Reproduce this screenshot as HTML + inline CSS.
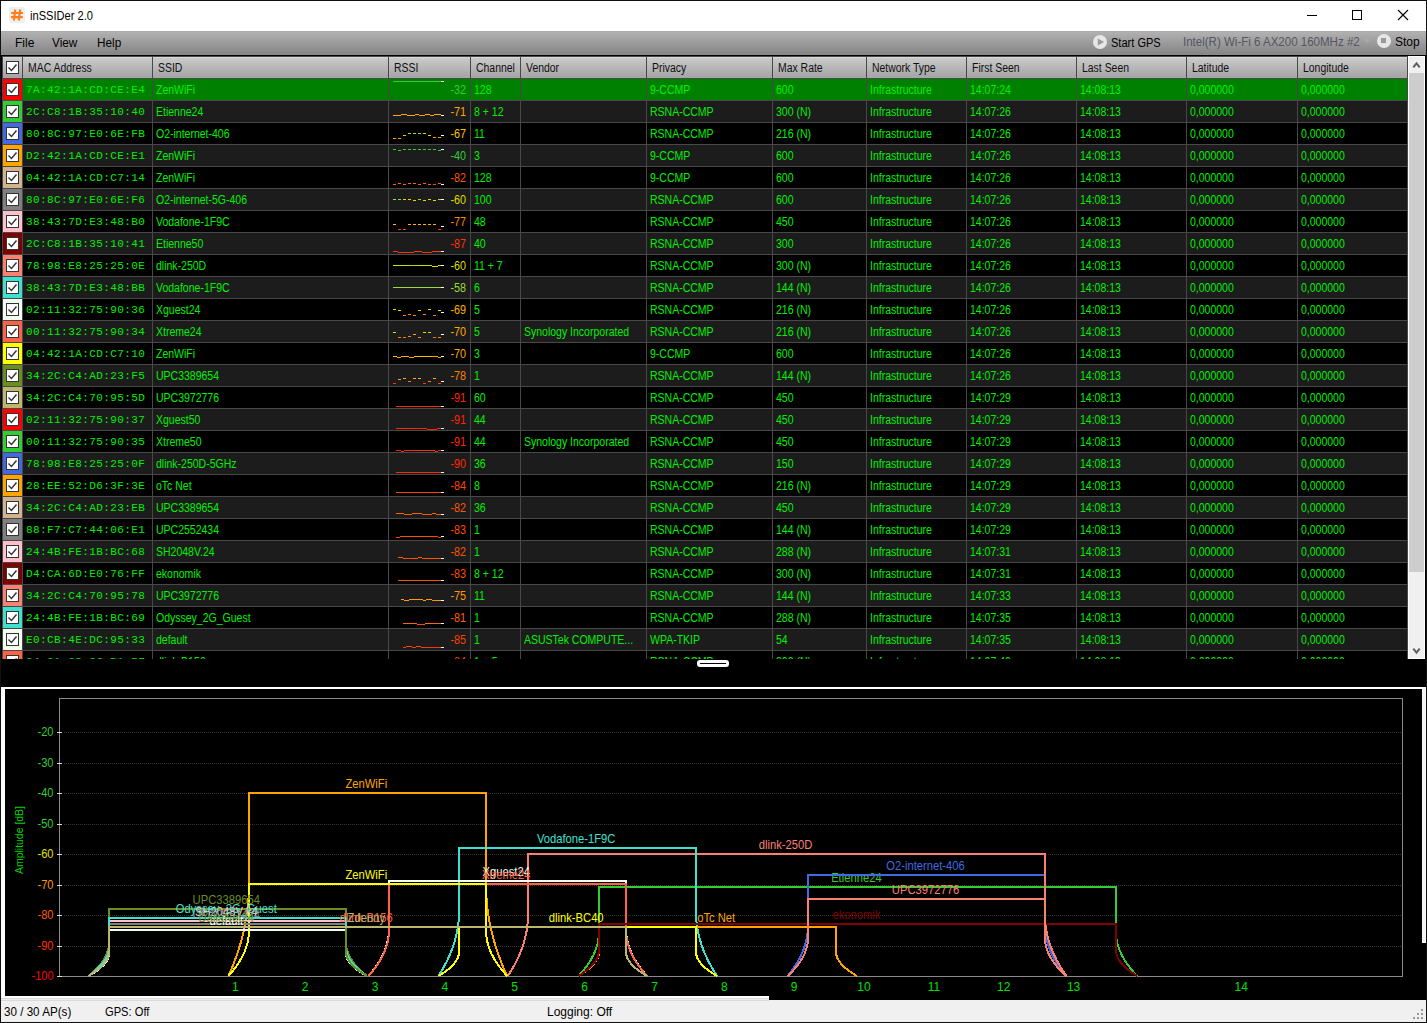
<!DOCTYPE html>
<html><head><meta charset="utf-8"><title>inSSIDer 2.0</title>
<style>
*{box-sizing:border-box}
html,body{margin:0;padding:0}
body{width:1427px;height:1023px;overflow:hidden;position:relative;background:#000;font-family:"Liberation Sans",sans-serif;font-size:12px}
.a{position:absolute}
.t{position:absolute;white-space:pre;line-height:14px;transform-origin:0 50%}
.cell{color:#00f000;transform:scaleX(.875)}
.mac{font-family:"Liberation Mono",monospace;font-size:11px;letter-spacing:0.42px;color:#00f000}
.hdr{color:#111;transform:scaleX(.87)}
.ui{color:#000;transform:scaleX(.9)}
.cb{position:absolute;width:13px;height:13px;background:#fff;border:1px solid #333}
</style></head><body>

<div class="a" style="left:0;top:0;width:1427px;height:1023px;background:#111"></div>
<div class="a" style="left:1px;top:1px;width:1425px;height:30px;background:#fff"></div>
<div class="a" style="left:9px;top:7px;width:16px;height:16px;background:#eef0f0;border-radius:2px"></div>
<svg class="a" style="left:9px;top:7px" width="16" height="16" viewBox="0 0 16 16"><g stroke="#ff7f1a" stroke-width="2.2" fill="none"><path d="M6.3 2.5 L4.8 13.5 M11.2 2.5 L9.7 13.5 M2.2 6 H14 M2 10.2 H13.8"/></g></svg>
<div class="t ui" style="left:30px;top:9px;color:#000;transform:scaleX(.925)">inSSIDer 2.0</div>
<div class="a" style="left:1307px;top:15px;width:10px;height:1px;background:#000"></div>
<div class="a" style="left:1352px;top:10px;width:10px;height:10px;border:1px solid #000"></div>
<svg class="a" style="left:1397px;top:9px" width="12" height="12" viewBox="0 0 12 12"><path d="M1 1 L11 11 M11 1 L1 11" stroke="#000" stroke-width="1.1"/></svg>
<div class="a" style="left:1px;top:31px;width:1425px;height:24px;background:linear-gradient(#a8a8a8 0px,#b0b0b0 1.5px,#868686 22.5px,#8c8c8c 24px)"></div>
<div class="t ui" style="left:15px;top:36px;transform:none">File</div>
<div class="t ui" style="left:52px;top:36px;transform:scaleX(.98)">View</div>
<div class="t ui" style="left:97px;top:36px;transform:scaleX(.98)">Help</div>
<div class="a" style="left:1093px;top:35px;width:14px;height:14px;border-radius:50%;background:#e6e6e6"></div>
<svg class="a" style="left:1093px;top:35px" width="14" height="14"><path d="M4.8 3.6 L11 7 L4.8 10.4 Z" fill="#9a9a9a"/></svg>
<div class="t ui" style="left:1111px;top:36px;transform:scaleX(.92)">Start GPS</div>
<div class="t ui" style="left:1183px;top:35px;color:#555560;transform:scaleX(.96)">Intel(R) Wi-Fi 6 AX200 160MHz #2</div>
<svg class="a" style="left:1363px;top:39px" width="8" height="5"><path d="M0 0 L8 0 L4 4 Z" fill="#a8a8a8"/></svg>
<div class="a" style="left:1377px;top:34px;width:14px;height:14px;border-radius:50%;background:#e6e6e6"></div>
<div class="a" style="left:1381px;top:38px;width:5px;height:5px;background:#999"></div>
<div class="t ui" style="left:1395px;top:35px;transform:none">Stop</div>
<div class="a" style="left:1px;top:55px;width:1425px;height:967px;background:#000"></div>
<div class="a" style="left:2px;top:56px;width:1406px;height:603px;background:#484848"></div>
<div class="a" style="left:3px;top:57px;width:1404px;height:21px;background:linear-gradient(#d8d8d8 0px,#d8d8d8 1px,#cacaca 1px,#a5a5a5 20px,#ababab 21px)"></div>
<div class="a" style="left:22px;top:57px;width:1px;height:21px;background:#484848"></div>
<div class="a" style="left:152px;top:57px;width:1px;height:21px;background:#484848"></div>
<div class="a" style="left:388px;top:57px;width:1px;height:21px;background:#484848"></div>
<div class="a" style="left:470px;top:57px;width:1px;height:21px;background:#484848"></div>
<div class="a" style="left:520px;top:57px;width:1px;height:21px;background:#484848"></div>
<div class="a" style="left:646px;top:57px;width:1px;height:21px;background:#484848"></div>
<div class="a" style="left:772px;top:57px;width:1px;height:21px;background:#484848"></div>
<div class="a" style="left:866px;top:57px;width:1px;height:21px;background:#484848"></div>
<div class="a" style="left:966px;top:57px;width:1px;height:21px;background:#484848"></div>
<div class="a" style="left:1076px;top:57px;width:1px;height:21px;background:#484848"></div>
<div class="a" style="left:1186px;top:57px;width:1px;height:21px;background:#484848"></div>
<div class="a" style="left:1297px;top:57px;width:1px;height:21px;background:#484848"></div>
<div class="a" style="left:1407px;top:57px;width:1px;height:21px;background:#484848"></div>
<div class="cb" style="left:6px;top:61px"></div>
<svg class="a" style="left:6px;top:61px" width="13" height="13"><path d="M2.5 6.5 L5.5 9.5 L10.5 3.5" stroke="#333" stroke-width="1.4" fill="none"/></svg>
<div class="t hdr" style="left:28px;top:61px">MAC Address</div>
<div class="t hdr" style="left:158px;top:61px">SSID</div>
<div class="t hdr" style="left:394px;top:61px">RSSI</div>
<div class="t hdr" style="left:476px;top:61px">Channel</div>
<div class="t hdr" style="left:526px;top:61px">Vendor</div>
<div class="t hdr" style="left:652px;top:61px">Privacy</div>
<div class="t hdr" style="left:778px;top:61px">Max Rate</div>
<div class="t hdr" style="left:872px;top:61px">Network Type</div>
<div class="t hdr" style="left:972px;top:61px">First Seen</div>
<div class="t hdr" style="left:1082px;top:61px">Last Seen</div>
<div class="t hdr" style="left:1192px;top:61px">Latitude</div>
<div class="t hdr" style="left:1303px;top:61px">Longitude</div>
<div class="a" style="left:3px;top:79px;width:1404px;height:21px;background:#008000;overflow:hidden">
<div class="a" style="left:0;top:0;width:19px;height:21px;background:#ff0000"></div>
<div class="cb" style="left:3px;top:4px"></div>
<svg class="a" style="left:3px;top:4px" width="13" height="13"><path d="M2.5 6.5 L5.5 9.5 L10.5 3.5" stroke="#333" stroke-width="1.4" fill="none"/></svg>
<div class="a" style="left:19px;top:0;width:1px;height:21px;background:#484848"></div>
<div class="a" style="left:149px;top:0;width:1px;height:21px;background:#484848"></div>
<div class="a" style="left:385px;top:0;width:1px;height:21px;background:#484848"></div>
<div class="a" style="left:467px;top:0;width:1px;height:21px;background:#484848"></div>
<div class="a" style="left:517px;top:0;width:1px;height:21px;background:#484848"></div>
<div class="a" style="left:643px;top:0;width:1px;height:21px;background:#484848"></div>
<div class="a" style="left:769px;top:0;width:1px;height:21px;background:#484848"></div>
<div class="a" style="left:863px;top:0;width:1px;height:21px;background:#484848"></div>
<div class="a" style="left:963px;top:0;width:1px;height:21px;background:#484848"></div>
<div class="a" style="left:1073px;top:0;width:1px;height:21px;background:#484848"></div>
<div class="a" style="left:1183px;top:0;width:1px;height:21px;background:#484848"></div>
<div class="a" style="left:1294px;top:0;width:1px;height:21px;background:#484848"></div>
<div class="a" style="left:1404px;top:0;width:1px;height:21px;background:#484848"></div>
<div class="t mac" style="left:23px;top:4px">7A:42:1A:CD:CE:E4</div>
<div class="t cell" style="left:153px;top:4px">ZenWiFi</div>
<div class="t cell" style="left:471px;top:4px">128</div>
<div class="t cell" style="left:647px;top:4px">9-CCMP</div>
<div class="t cell" style="left:773px;top:4px">600</div>
<div class="t cell" style="left:867px;top:4px">Infrastructure</div>
<div class="t cell" style="left:967px;top:4px">14:07:24</div>
<div class="t cell" style="left:1077px;top:4px">14:08:13</div>
<div class="t cell" style="left:1187px;top:4px">0,000000</div>
<div class="t cell" style="left:1298px;top:4px">0,000000</div>
<div class="a" style="left:390px;top:2px;width:48px;height:1px;background:#33cc33"></div>
<div class="a" style="left:438px;top:2px;width:3px;height:1px;background:#fff"></div>
<div class="t" style="left:416px;width:47px;text-align:right;top:4px;color:#33cc33;transform:scaleX(.9);transform-origin:100% 50%">-32</div>
</div>
<div class="a" style="left:3px;top:101px;width:1404px;height:21px;background:#1c1c1c;overflow:hidden">
<div class="a" style="left:0;top:0;width:19px;height:21px;background:#32cd32"></div>
<div class="cb" style="left:3px;top:4px"></div>
<svg class="a" style="left:3px;top:4px" width="13" height="13"><path d="M2.5 6.5 L5.5 9.5 L10.5 3.5" stroke="#333" stroke-width="1.4" fill="none"/></svg>
<div class="a" style="left:19px;top:0;width:1px;height:21px;background:#484848"></div>
<div class="a" style="left:149px;top:0;width:1px;height:21px;background:#484848"></div>
<div class="a" style="left:385px;top:0;width:1px;height:21px;background:#484848"></div>
<div class="a" style="left:467px;top:0;width:1px;height:21px;background:#484848"></div>
<div class="a" style="left:517px;top:0;width:1px;height:21px;background:#484848"></div>
<div class="a" style="left:643px;top:0;width:1px;height:21px;background:#484848"></div>
<div class="a" style="left:769px;top:0;width:1px;height:21px;background:#484848"></div>
<div class="a" style="left:863px;top:0;width:1px;height:21px;background:#484848"></div>
<div class="a" style="left:963px;top:0;width:1px;height:21px;background:#484848"></div>
<div class="a" style="left:1073px;top:0;width:1px;height:21px;background:#484848"></div>
<div class="a" style="left:1183px;top:0;width:1px;height:21px;background:#484848"></div>
<div class="a" style="left:1294px;top:0;width:1px;height:21px;background:#484848"></div>
<div class="a" style="left:1404px;top:0;width:1px;height:21px;background:#484848"></div>
<div class="t mac" style="left:23px;top:4px">2C:C8:1B:35:10:40</div>
<div class="t cell" style="left:153px;top:4px">Etienne24</div>
<div class="t cell" style="left:471px;top:4px">8 + 12</div>
<div class="t cell" style="left:647px;top:4px">RSNA-CCMP</div>
<div class="t cell" style="left:773px;top:4px">300 (N)</div>
<div class="t cell" style="left:867px;top:4px">Infrastructure</div>
<div class="t cell" style="left:967px;top:4px">14:07:26</div>
<div class="t cell" style="left:1077px;top:4px">14:08:13</div>
<div class="t cell" style="left:1187px;top:4px">0,000000</div>
<div class="t cell" style="left:1298px;top:4px">0,000000</div>
<div class="a" style="left:390px;top:14px;width:8px;height:1px;background:#ffa700"></div>
<div class="a" style="left:398px;top:13px;width:6px;height:1px;background:#ffaa00"></div>
<div class="a" style="left:404px;top:14px;width:8px;height:1px;background:#ffa700"></div>
<div class="a" style="left:412px;top:13px;width:4px;height:1px;background:#ffaa00"></div>
<div class="a" style="left:416px;top:14px;width:6px;height:1px;background:#ffa000"></div>
<div class="a" style="left:422px;top:13px;width:5px;height:1px;background:#ffb200"></div>
<div class="a" style="left:427px;top:14px;width:4px;height:1px;background:#ffa700"></div>
<div class="a" style="left:431px;top:13px;width:7px;height:1px;background:#ffaa00"></div>
<div class="a" style="left:438px;top:14px;width:3px;height:1px;background:#fff"></div>
<div class="t" style="left:416px;width:47px;text-align:right;top:4px;color:#ffa700;transform:scaleX(.9);transform-origin:100% 50%">-71</div>
</div>
<div class="a" style="left:3px;top:123px;width:1404px;height:21px;background:#000;overflow:hidden">
<div class="a" style="left:0;top:0;width:19px;height:21px;background:#4169e1"></div>
<div class="cb" style="left:3px;top:4px"></div>
<svg class="a" style="left:3px;top:4px" width="13" height="13"><path d="M2.5 6.5 L5.5 9.5 L10.5 3.5" stroke="#333" stroke-width="1.4" fill="none"/></svg>
<div class="a" style="left:19px;top:0;width:1px;height:21px;background:#484848"></div>
<div class="a" style="left:149px;top:0;width:1px;height:21px;background:#484848"></div>
<div class="a" style="left:385px;top:0;width:1px;height:21px;background:#484848"></div>
<div class="a" style="left:467px;top:0;width:1px;height:21px;background:#484848"></div>
<div class="a" style="left:517px;top:0;width:1px;height:21px;background:#484848"></div>
<div class="a" style="left:643px;top:0;width:1px;height:21px;background:#484848"></div>
<div class="a" style="left:769px;top:0;width:1px;height:21px;background:#484848"></div>
<div class="a" style="left:863px;top:0;width:1px;height:21px;background:#484848"></div>
<div class="a" style="left:963px;top:0;width:1px;height:21px;background:#484848"></div>
<div class="a" style="left:1073px;top:0;width:1px;height:21px;background:#484848"></div>
<div class="a" style="left:1183px;top:0;width:1px;height:21px;background:#484848"></div>
<div class="a" style="left:1294px;top:0;width:1px;height:21px;background:#484848"></div>
<div class="a" style="left:1404px;top:0;width:1px;height:21px;background:#484848"></div>
<div class="t mac" style="left:23px;top:4px">80:8C:97:E0:6E:FB</div>
<div class="t cell" style="left:153px;top:4px">O2-internet-406</div>
<div class="t cell" style="left:471px;top:4px">11</div>
<div class="t cell" style="left:647px;top:4px">RSNA-CCMP</div>
<div class="t cell" style="left:773px;top:4px">216 (N)</div>
<div class="t cell" style="left:867px;top:4px">Infrastructure</div>
<div class="t cell" style="left:967px;top:4px">14:07:26</div>
<div class="t cell" style="left:1077px;top:4px">14:08:13</div>
<div class="t cell" style="left:1187px;top:4px">0,000000</div>
<div class="t cell" style="left:1298px;top:4px">0,000000</div>
<div class="a" style="left:390px;top:15px;width:3px;height:1px;background:#ff9100"></div>
<div class="a" style="left:395px;top:15px;width:3px;height:1px;background:#ff9900"></div>
<div class="a" style="left:400px;top:12px;width:3px;height:1px;background:#ffc400"></div>
<div class="a" style="left:405px;top:10px;width:3px;height:1px;background:#99dd33"></div>
<div class="a" style="left:410px;top:10px;width:3px;height:1px;background:#99dd33"></div>
<div class="a" style="left:415px;top:10px;width:3px;height:1px;background:#99dd33"></div>
<div class="a" style="left:420px;top:10px;width:3px;height:1px;background:#dddd00"></div>
<div class="a" style="left:425px;top:12px;width:3px;height:1px;background:#ffc400"></div>
<div class="a" style="left:430px;top:14px;width:3px;height:1px;background:#ff9c00"></div>
<div class="a" style="left:435px;top:14px;width:3px;height:1px;background:#ff9c00"></div>
<div class="a" style="left:438px;top:12px;width:3px;height:1px;background:#fff"></div>
<div class="t" style="left:416px;width:47px;text-align:right;top:4px;color:#ffc400;transform:scaleX(.9);transform-origin:100% 50%">-67</div>
</div>
<div class="a" style="left:3px;top:145px;width:1404px;height:21px;background:#1c1c1c;overflow:hidden">
<div class="a" style="left:0;top:0;width:19px;height:21px;background:#ffa500"></div>
<div class="cb" style="left:3px;top:4px"></div>
<svg class="a" style="left:3px;top:4px" width="13" height="13"><path d="M2.5 6.5 L5.5 9.5 L10.5 3.5" stroke="#333" stroke-width="1.4" fill="none"/></svg>
<div class="a" style="left:19px;top:0;width:1px;height:21px;background:#484848"></div>
<div class="a" style="left:149px;top:0;width:1px;height:21px;background:#484848"></div>
<div class="a" style="left:385px;top:0;width:1px;height:21px;background:#484848"></div>
<div class="a" style="left:467px;top:0;width:1px;height:21px;background:#484848"></div>
<div class="a" style="left:517px;top:0;width:1px;height:21px;background:#484848"></div>
<div class="a" style="left:643px;top:0;width:1px;height:21px;background:#484848"></div>
<div class="a" style="left:769px;top:0;width:1px;height:21px;background:#484848"></div>
<div class="a" style="left:863px;top:0;width:1px;height:21px;background:#484848"></div>
<div class="a" style="left:963px;top:0;width:1px;height:21px;background:#484848"></div>
<div class="a" style="left:1073px;top:0;width:1px;height:21px;background:#484848"></div>
<div class="a" style="left:1183px;top:0;width:1px;height:21px;background:#484848"></div>
<div class="a" style="left:1294px;top:0;width:1px;height:21px;background:#484848"></div>
<div class="a" style="left:1404px;top:0;width:1px;height:21px;background:#484848"></div>
<div class="t mac" style="left:23px;top:4px">D2:42:1A:CD:CE:E1</div>
<div class="t cell" style="left:153px;top:4px">ZenWiFi</div>
<div class="t cell" style="left:471px;top:4px">3</div>
<div class="t cell" style="left:647px;top:4px">9-CCMP</div>
<div class="t cell" style="left:773px;top:4px">600</div>
<div class="t cell" style="left:867px;top:4px">Infrastructure</div>
<div class="t cell" style="left:967px;top:4px">14:07:26</div>
<div class="t cell" style="left:1077px;top:4px">14:08:13</div>
<div class="t cell" style="left:1187px;top:4px">0,000000</div>
<div class="t cell" style="left:1298px;top:4px">0,000000</div>
<div class="a" style="left:390px;top:4px;width:3px;height:1px;background:#33cc33"></div>
<div class="a" style="left:395px;top:5px;width:3px;height:1px;background:#33cc33"></div>
<div class="a" style="left:400px;top:4px;width:3px;height:1px;background:#33cc33"></div>
<div class="a" style="left:405px;top:4px;width:3px;height:1px;background:#33cc33"></div>
<div class="a" style="left:410px;top:4px;width:3px;height:1px;background:#33cc33"></div>
<div class="a" style="left:415px;top:4px;width:3px;height:1px;background:#33cc33"></div>
<div class="a" style="left:420px;top:4px;width:3px;height:1px;background:#33cc33"></div>
<div class="a" style="left:425px;top:4px;width:3px;height:1px;background:#33cc33"></div>
<div class="a" style="left:430px;top:4px;width:3px;height:1px;background:#33cc33"></div>
<div class="a" style="left:435px;top:5px;width:3px;height:1px;background:#33cc33"></div>
<div class="a" style="left:438px;top:4px;width:3px;height:1px;background:#fff"></div>
<div class="t" style="left:416px;width:47px;text-align:right;top:4px;color:#33cc33;transform:scaleX(.9);transform-origin:100% 50%">-40</div>
</div>
<div class="a" style="left:3px;top:167px;width:1404px;height:21px;background:#000;overflow:hidden">
<div class="a" style="left:0;top:0;width:19px;height:21px;background:#d2b48c"></div>
<div class="cb" style="left:3px;top:4px"></div>
<svg class="a" style="left:3px;top:4px" width="13" height="13"><path d="M2.5 6.5 L5.5 9.5 L10.5 3.5" stroke="#333" stroke-width="1.4" fill="none"/></svg>
<div class="a" style="left:19px;top:0;width:1px;height:21px;background:#484848"></div>
<div class="a" style="left:149px;top:0;width:1px;height:21px;background:#484848"></div>
<div class="a" style="left:385px;top:0;width:1px;height:21px;background:#484848"></div>
<div class="a" style="left:467px;top:0;width:1px;height:21px;background:#484848"></div>
<div class="a" style="left:517px;top:0;width:1px;height:21px;background:#484848"></div>
<div class="a" style="left:643px;top:0;width:1px;height:21px;background:#484848"></div>
<div class="a" style="left:769px;top:0;width:1px;height:21px;background:#484848"></div>
<div class="a" style="left:863px;top:0;width:1px;height:21px;background:#484848"></div>
<div class="a" style="left:963px;top:0;width:1px;height:21px;background:#484848"></div>
<div class="a" style="left:1073px;top:0;width:1px;height:21px;background:#484848"></div>
<div class="a" style="left:1183px;top:0;width:1px;height:21px;background:#484848"></div>
<div class="a" style="left:1294px;top:0;width:1px;height:21px;background:#484848"></div>
<div class="a" style="left:1404px;top:0;width:1px;height:21px;background:#484848"></div>
<div class="t mac" style="left:23px;top:4px">04:42:1A:CD:C7:14</div>
<div class="t cell" style="left:153px;top:4px">ZenWiFi</div>
<div class="t cell" style="left:471px;top:4px">128</div>
<div class="t cell" style="left:647px;top:4px">9-CCMP</div>
<div class="t cell" style="left:773px;top:4px">600</div>
<div class="t cell" style="left:867px;top:4px">Infrastructure</div>
<div class="t cell" style="left:967px;top:4px">14:07:26</div>
<div class="t cell" style="left:1077px;top:4px">14:08:13</div>
<div class="t cell" style="left:1187px;top:4px">0,000000</div>
<div class="t cell" style="left:1298px;top:4px">0,000000</div>
<div class="a" style="left:390px;top:17px;width:3px;height:1px;background:#ff5500"></div>
<div class="a" style="left:395px;top:16px;width:3px;height:1px;background:#ff6a00"></div>
<div class="a" style="left:400px;top:17px;width:3px;height:1px;background:#ff5500"></div>
<div class="a" style="left:405px;top:16px;width:3px;height:1px;background:#ff6a00"></div>
<div class="a" style="left:410px;top:16px;width:3px;height:1px;background:#ff6000"></div>
<div class="a" style="left:415px;top:17px;width:3px;height:1px;background:#ff5500"></div>
<div class="a" style="left:420px;top:16px;width:3px;height:1px;background:#ff6000"></div>
<div class="a" style="left:425px;top:17px;width:3px;height:1px;background:#ff5500"></div>
<div class="a" style="left:430px;top:17px;width:3px;height:1px;background:#ff4400"></div>
<div class="a" style="left:435px;top:16px;width:3px;height:1px;background:#ff6000"></div>
<div class="a" style="left:438px;top:17px;width:3px;height:1px;background:#fff"></div>
<div class="t" style="left:416px;width:47px;text-align:right;top:4px;color:#ff5500;transform:scaleX(.9);transform-origin:100% 50%">-82</div>
</div>
<div class="a" style="left:3px;top:189px;width:1404px;height:21px;background:#1c1c1c;overflow:hidden">
<div class="a" style="left:0;top:0;width:19px;height:21px;background:#808080"></div>
<div class="cb" style="left:3px;top:4px"></div>
<svg class="a" style="left:3px;top:4px" width="13" height="13"><path d="M2.5 6.5 L5.5 9.5 L10.5 3.5" stroke="#333" stroke-width="1.4" fill="none"/></svg>
<div class="a" style="left:19px;top:0;width:1px;height:21px;background:#484848"></div>
<div class="a" style="left:149px;top:0;width:1px;height:21px;background:#484848"></div>
<div class="a" style="left:385px;top:0;width:1px;height:21px;background:#484848"></div>
<div class="a" style="left:467px;top:0;width:1px;height:21px;background:#484848"></div>
<div class="a" style="left:517px;top:0;width:1px;height:21px;background:#484848"></div>
<div class="a" style="left:643px;top:0;width:1px;height:21px;background:#484848"></div>
<div class="a" style="left:769px;top:0;width:1px;height:21px;background:#484848"></div>
<div class="a" style="left:863px;top:0;width:1px;height:21px;background:#484848"></div>
<div class="a" style="left:963px;top:0;width:1px;height:21px;background:#484848"></div>
<div class="a" style="left:1073px;top:0;width:1px;height:21px;background:#484848"></div>
<div class="a" style="left:1183px;top:0;width:1px;height:21px;background:#484848"></div>
<div class="a" style="left:1294px;top:0;width:1px;height:21px;background:#484848"></div>
<div class="a" style="left:1404px;top:0;width:1px;height:21px;background:#484848"></div>
<div class="t mac" style="left:23px;top:4px">80:8C:97:E0:6E:F6</div>
<div class="t cell" style="left:153px;top:4px">O2-internet-5G-406</div>
<div class="t cell" style="left:471px;top:4px">100</div>
<div class="t cell" style="left:647px;top:4px">RSNA-CCMP</div>
<div class="t cell" style="left:773px;top:4px">600</div>
<div class="t cell" style="left:867px;top:4px">Infrastructure</div>
<div class="t cell" style="left:967px;top:4px">14:07:26</div>
<div class="t cell" style="left:1077px;top:4px">14:08:13</div>
<div class="t cell" style="left:1187px;top:4px">0,000000</div>
<div class="t cell" style="left:1298px;top:4px">0,000000</div>
<div class="a" style="left:390px;top:10px;width:3px;height:1px;background:#99dd33"></div>
<div class="a" style="left:395px;top:10px;width:3px;height:1px;background:#99dd33"></div>
<div class="a" style="left:400px;top:10px;width:3px;height:1px;background:#dddd00"></div>
<div class="a" style="left:405px;top:10px;width:3px;height:1px;background:#dddd00"></div>
<div class="a" style="left:410px;top:11px;width:3px;height:1px;background:#e3da00"></div>
<div class="a" style="left:415px;top:10px;width:3px;height:1px;background:#99dd33"></div>
<div class="a" style="left:420px;top:11px;width:3px;height:1px;background:#e3da00"></div>
<div class="a" style="left:425px;top:10px;width:3px;height:1px;background:#dddd00"></div>
<div class="a" style="left:430px;top:11px;width:3px;height:1px;background:#e8d700"></div>
<div class="a" style="left:435px;top:10px;width:3px;height:1px;background:#bbdd1a"></div>
<div class="a" style="left:438px;top:10px;width:3px;height:1px;background:#fff"></div>
<div class="t" style="left:416px;width:47px;text-align:right;top:4px;color:#dddd00;transform:scaleX(.9);transform-origin:100% 50%">-60</div>
</div>
<div class="a" style="left:3px;top:211px;width:1404px;height:21px;background:#000;overflow:hidden">
<div class="a" style="left:0;top:0;width:19px;height:21px;background:#ffc0cb"></div>
<div class="cb" style="left:3px;top:4px"></div>
<svg class="a" style="left:3px;top:4px" width="13" height="13"><path d="M2.5 6.5 L5.5 9.5 L10.5 3.5" stroke="#333" stroke-width="1.4" fill="none"/></svg>
<div class="a" style="left:19px;top:0;width:1px;height:21px;background:#484848"></div>
<div class="a" style="left:149px;top:0;width:1px;height:21px;background:#484848"></div>
<div class="a" style="left:385px;top:0;width:1px;height:21px;background:#484848"></div>
<div class="a" style="left:467px;top:0;width:1px;height:21px;background:#484848"></div>
<div class="a" style="left:517px;top:0;width:1px;height:21px;background:#484848"></div>
<div class="a" style="left:643px;top:0;width:1px;height:21px;background:#484848"></div>
<div class="a" style="left:769px;top:0;width:1px;height:21px;background:#484848"></div>
<div class="a" style="left:863px;top:0;width:1px;height:21px;background:#484848"></div>
<div class="a" style="left:963px;top:0;width:1px;height:21px;background:#484848"></div>
<div class="a" style="left:1073px;top:0;width:1px;height:21px;background:#484848"></div>
<div class="a" style="left:1183px;top:0;width:1px;height:21px;background:#484848"></div>
<div class="a" style="left:1294px;top:0;width:1px;height:21px;background:#484848"></div>
<div class="a" style="left:1404px;top:0;width:1px;height:21px;background:#484848"></div>
<div class="t mac" style="left:23px;top:4px">38:43:7D:E3:48:B0</div>
<div class="t cell" style="left:153px;top:4px">Vodafone-1F9C</div>
<div class="t cell" style="left:471px;top:4px">48</div>
<div class="t cell" style="left:647px;top:4px">RSNA-CCMP</div>
<div class="t cell" style="left:773px;top:4px">450</div>
<div class="t cell" style="left:867px;top:4px">Infrastructure</div>
<div class="t cell" style="left:967px;top:4px">14:07:26</div>
<div class="t cell" style="left:1077px;top:4px">14:08:13</div>
<div class="t cell" style="left:1187px;top:4px">0,000000</div>
<div class="t cell" style="left:1298px;top:4px">0,000000</div>
<div class="a" style="left:390px;top:13px;width:3px;height:1px;background:#ffbb00"></div>
<div class="a" style="left:395px;top:18px;width:3px;height:1px;background:#ff3e00"></div>
<div class="a" style="left:400px;top:18px;width:3px;height:1px;background:#ff3e00"></div>
<div class="a" style="left:405px;top:13px;width:3px;height:1px;background:#ffbb00"></div>
<div class="a" style="left:410px;top:13px;width:3px;height:1px;background:#ffb200"></div>
<div class="a" style="left:415px;top:13px;width:3px;height:1px;background:#ffbb00"></div>
<div class="a" style="left:420px;top:13px;width:3px;height:1px;background:#ffbb00"></div>
<div class="a" style="left:425px;top:13px;width:3px;height:1px;background:#ffb200"></div>
<div class="a" style="left:430px;top:13px;width:3px;height:1px;background:#ffb200"></div>
<div class="a" style="left:435px;top:18px;width:3px;height:1px;background:#ff3e00"></div>
<div class="a" style="left:438px;top:15px;width:3px;height:1px;background:#fff"></div>
<div class="t" style="left:416px;width:47px;text-align:right;top:4px;color:#ff8800;transform:scaleX(.9);transform-origin:100% 50%">-77</div>
</div>
<div class="a" style="left:3px;top:233px;width:1404px;height:21px;background:#1c1c1c;overflow:hidden">
<div class="a" style="left:0;top:0;width:19px;height:21px;background:#800000"></div>
<div class="cb" style="left:3px;top:4px"></div>
<svg class="a" style="left:3px;top:4px" width="13" height="13"><path d="M2.5 6.5 L5.5 9.5 L10.5 3.5" stroke="#333" stroke-width="1.4" fill="none"/></svg>
<div class="a" style="left:19px;top:0;width:1px;height:21px;background:#484848"></div>
<div class="a" style="left:149px;top:0;width:1px;height:21px;background:#484848"></div>
<div class="a" style="left:385px;top:0;width:1px;height:21px;background:#484848"></div>
<div class="a" style="left:467px;top:0;width:1px;height:21px;background:#484848"></div>
<div class="a" style="left:517px;top:0;width:1px;height:21px;background:#484848"></div>
<div class="a" style="left:643px;top:0;width:1px;height:21px;background:#484848"></div>
<div class="a" style="left:769px;top:0;width:1px;height:21px;background:#484848"></div>
<div class="a" style="left:863px;top:0;width:1px;height:21px;background:#484848"></div>
<div class="a" style="left:963px;top:0;width:1px;height:21px;background:#484848"></div>
<div class="a" style="left:1073px;top:0;width:1px;height:21px;background:#484848"></div>
<div class="a" style="left:1183px;top:0;width:1px;height:21px;background:#484848"></div>
<div class="a" style="left:1294px;top:0;width:1px;height:21px;background:#484848"></div>
<div class="a" style="left:1404px;top:0;width:1px;height:21px;background:#484848"></div>
<div class="t mac" style="left:23px;top:4px">2C:C8:1B:35:10:41</div>
<div class="t cell" style="left:153px;top:4px">Etienne50</div>
<div class="t cell" style="left:471px;top:4px">40</div>
<div class="t cell" style="left:647px;top:4px">RSNA-CCMP</div>
<div class="t cell" style="left:773px;top:4px">300</div>
<div class="t cell" style="left:867px;top:4px">Infrastructure</div>
<div class="t cell" style="left:967px;top:4px">14:07:26</div>
<div class="t cell" style="left:1077px;top:4px">14:08:13</div>
<div class="t cell" style="left:1187px;top:4px">0,000000</div>
<div class="t cell" style="left:1298px;top:4px">0,000000</div>
<div class="a" style="left:390px;top:18px;width:5px;height:1px;background:#ff3300"></div>
<div class="a" style="left:395px;top:19px;width:10px;height:1px;background:#ff3000"></div>
<div class="a" style="left:405px;top:19px;width:6px;height:1px;background:#ff2c00"></div>
<div class="a" style="left:411px;top:18px;width:5px;height:1px;background:#ff3900"></div>
<div class="a" style="left:416px;top:18px;width:3px;height:1px;background:#ff3300"></div>
<div class="a" style="left:419px;top:19px;width:4px;height:1px;background:#ff2c00"></div>
<div class="a" style="left:423px;top:19px;width:6px;height:1px;background:#ff2c00"></div>
<div class="a" style="left:429px;top:18px;width:4px;height:1px;background:#ff3300"></div>
<div class="a" style="left:433px;top:18px;width:5px;height:1px;background:#ff3e00"></div>
<div class="a" style="left:438px;top:18px;width:3px;height:1px;background:#fff"></div>
<div class="t" style="left:416px;width:47px;text-align:right;top:4px;color:#ff3300;transform:scaleX(.9);transform-origin:100% 50%">-87</div>
</div>
<div class="a" style="left:3px;top:255px;width:1404px;height:21px;background:#000;overflow:hidden">
<div class="a" style="left:0;top:0;width:19px;height:21px;background:#fa8072"></div>
<div class="cb" style="left:3px;top:4px"></div>
<svg class="a" style="left:3px;top:4px" width="13" height="13"><path d="M2.5 6.5 L5.5 9.5 L10.5 3.5" stroke="#333" stroke-width="1.4" fill="none"/></svg>
<div class="a" style="left:19px;top:0;width:1px;height:21px;background:#484848"></div>
<div class="a" style="left:149px;top:0;width:1px;height:21px;background:#484848"></div>
<div class="a" style="left:385px;top:0;width:1px;height:21px;background:#484848"></div>
<div class="a" style="left:467px;top:0;width:1px;height:21px;background:#484848"></div>
<div class="a" style="left:517px;top:0;width:1px;height:21px;background:#484848"></div>
<div class="a" style="left:643px;top:0;width:1px;height:21px;background:#484848"></div>
<div class="a" style="left:769px;top:0;width:1px;height:21px;background:#484848"></div>
<div class="a" style="left:863px;top:0;width:1px;height:21px;background:#484848"></div>
<div class="a" style="left:963px;top:0;width:1px;height:21px;background:#484848"></div>
<div class="a" style="left:1073px;top:0;width:1px;height:21px;background:#484848"></div>
<div class="a" style="left:1183px;top:0;width:1px;height:21px;background:#484848"></div>
<div class="a" style="left:1294px;top:0;width:1px;height:21px;background:#484848"></div>
<div class="a" style="left:1404px;top:0;width:1px;height:21px;background:#484848"></div>
<div class="t mac" style="left:23px;top:4px">78:98:E8:25:25:0E</div>
<div class="t cell" style="left:153px;top:4px">dlink-250D</div>
<div class="t cell" style="left:471px;top:4px">11 + 7</div>
<div class="t cell" style="left:647px;top:4px">RSNA-CCMP</div>
<div class="t cell" style="left:773px;top:4px">300 (N)</div>
<div class="t cell" style="left:867px;top:4px">Infrastructure</div>
<div class="t cell" style="left:967px;top:4px">14:07:26</div>
<div class="t cell" style="left:1077px;top:4px">14:08:13</div>
<div class="t cell" style="left:1187px;top:4px">0,000000</div>
<div class="t cell" style="left:1298px;top:4px">0,000000</div>
<div class="a" style="left:390px;top:10px;width:4px;height:1px;background:#dddd00"></div>
<div class="a" style="left:394px;top:10px;width:10px;height:1px;background:#bbdd1a"></div>
<div class="a" style="left:404px;top:10px;width:3px;height:1px;background:#dddd00"></div>
<div class="a" style="left:407px;top:10px;width:5px;height:1px;background:#99dd33"></div>
<div class="a" style="left:412px;top:10px;width:3px;height:1px;background:#99dd33"></div>
<div class="a" style="left:415px;top:10px;width:8px;height:1px;background:#dddd00"></div>
<div class="a" style="left:423px;top:10px;width:6px;height:1px;background:#bbdd1a"></div>
<div class="a" style="left:429px;top:11px;width:6px;height:1px;background:#e8d700"></div>
<div class="a" style="left:435px;top:10px;width:3px;height:1px;background:#dddd00"></div>
<div class="a" style="left:438px;top:10px;width:3px;height:1px;background:#fff"></div>
<div class="t" style="left:416px;width:47px;text-align:right;top:4px;color:#dddd00;transform:scaleX(.9);transform-origin:100% 50%">-60</div>
</div>
<div class="a" style="left:3px;top:277px;width:1404px;height:21px;background:#1c1c1c;overflow:hidden">
<div class="a" style="left:0;top:0;width:19px;height:21px;background:#40e0d0"></div>
<div class="cb" style="left:3px;top:4px"></div>
<svg class="a" style="left:3px;top:4px" width="13" height="13"><path d="M2.5 6.5 L5.5 9.5 L10.5 3.5" stroke="#333" stroke-width="1.4" fill="none"/></svg>
<div class="a" style="left:19px;top:0;width:1px;height:21px;background:#484848"></div>
<div class="a" style="left:149px;top:0;width:1px;height:21px;background:#484848"></div>
<div class="a" style="left:385px;top:0;width:1px;height:21px;background:#484848"></div>
<div class="a" style="left:467px;top:0;width:1px;height:21px;background:#484848"></div>
<div class="a" style="left:517px;top:0;width:1px;height:21px;background:#484848"></div>
<div class="a" style="left:643px;top:0;width:1px;height:21px;background:#484848"></div>
<div class="a" style="left:769px;top:0;width:1px;height:21px;background:#484848"></div>
<div class="a" style="left:863px;top:0;width:1px;height:21px;background:#484848"></div>
<div class="a" style="left:963px;top:0;width:1px;height:21px;background:#484848"></div>
<div class="a" style="left:1073px;top:0;width:1px;height:21px;background:#484848"></div>
<div class="a" style="left:1183px;top:0;width:1px;height:21px;background:#484848"></div>
<div class="a" style="left:1294px;top:0;width:1px;height:21px;background:#484848"></div>
<div class="a" style="left:1404px;top:0;width:1px;height:21px;background:#484848"></div>
<div class="t mac" style="left:23px;top:4px">38:43:7D:E3:48:BB</div>
<div class="t cell" style="left:153px;top:4px">Vodafone-1F9C</div>
<div class="t cell" style="left:471px;top:4px">6</div>
<div class="t cell" style="left:647px;top:4px">RSNA-CCMP</div>
<div class="t cell" style="left:773px;top:4px">144 (N)</div>
<div class="t cell" style="left:867px;top:4px">Infrastructure</div>
<div class="t cell" style="left:967px;top:4px">14:07:26</div>
<div class="t cell" style="left:1077px;top:4px">14:08:13</div>
<div class="t cell" style="left:1187px;top:4px">0,000000</div>
<div class="t cell" style="left:1298px;top:4px">0,000000</div>
<div class="a" style="left:390px;top:10px;width:48px;height:1px;background:#99dd33"></div>
<div class="a" style="left:438px;top:10px;width:3px;height:1px;background:#fff"></div>
<div class="t" style="left:416px;width:47px;text-align:right;top:4px;color:#99dd33;transform:scaleX(.9);transform-origin:100% 50%">-58</div>
</div>
<div class="a" style="left:3px;top:299px;width:1404px;height:21px;background:#000;overflow:hidden">
<div class="a" style="left:0;top:0;width:19px;height:21px;background:#f0fff0"></div>
<div class="cb" style="left:3px;top:4px"></div>
<svg class="a" style="left:3px;top:4px" width="13" height="13"><path d="M2.5 6.5 L5.5 9.5 L10.5 3.5" stroke="#333" stroke-width="1.4" fill="none"/></svg>
<div class="a" style="left:19px;top:0;width:1px;height:21px;background:#484848"></div>
<div class="a" style="left:149px;top:0;width:1px;height:21px;background:#484848"></div>
<div class="a" style="left:385px;top:0;width:1px;height:21px;background:#484848"></div>
<div class="a" style="left:467px;top:0;width:1px;height:21px;background:#484848"></div>
<div class="a" style="left:517px;top:0;width:1px;height:21px;background:#484848"></div>
<div class="a" style="left:643px;top:0;width:1px;height:21px;background:#484848"></div>
<div class="a" style="left:769px;top:0;width:1px;height:21px;background:#484848"></div>
<div class="a" style="left:863px;top:0;width:1px;height:21px;background:#484848"></div>
<div class="a" style="left:963px;top:0;width:1px;height:21px;background:#484848"></div>
<div class="a" style="left:1073px;top:0;width:1px;height:21px;background:#484848"></div>
<div class="a" style="left:1183px;top:0;width:1px;height:21px;background:#484848"></div>
<div class="a" style="left:1294px;top:0;width:1px;height:21px;background:#484848"></div>
<div class="a" style="left:1404px;top:0;width:1px;height:21px;background:#484848"></div>
<div class="t mac" style="left:23px;top:4px">02:11:32:75:90:36</div>
<div class="t cell" style="left:153px;top:4px">Xguest24</div>
<div class="t cell" style="left:471px;top:4px">5</div>
<div class="t cell" style="left:647px;top:4px">RSNA-CCMP</div>
<div class="t cell" style="left:773px;top:4px">216 (N)</div>
<div class="t cell" style="left:867px;top:4px">Infrastructure</div>
<div class="t cell" style="left:967px;top:4px">14:07:26</div>
<div class="t cell" style="left:1077px;top:4px">14:08:13</div>
<div class="t cell" style="left:1187px;top:4px">0,000000</div>
<div class="t cell" style="left:1298px;top:4px">0,000000</div>
<div class="a" style="left:390px;top:10px;width:3px;height:1px;background:#dddd00"></div>
<div class="a" style="left:395px;top:11px;width:3px;height:1px;background:#e3da00"></div>
<div class="a" style="left:400px;top:16px;width:3px;height:1px;background:#ff8000"></div>
<div class="a" style="left:405px;top:15px;width:3px;height:1px;background:#ff8800"></div>
<div class="a" style="left:410px;top:16px;width:3px;height:1px;background:#ff8000"></div>
<div class="a" style="left:415px;top:11px;width:3px;height:1px;background:#e8d700"></div>
<div class="a" style="left:420px;top:15px;width:3px;height:1px;background:#ff8800"></div>
<div class="a" style="left:425px;top:10px;width:3px;height:1px;background:#dddd00"></div>
<div class="a" style="left:430px;top:16px;width:3px;height:1px;background:#ff8000"></div>
<div class="a" style="left:435px;top:11px;width:3px;height:1px;background:#e3da00"></div>
<div class="a" style="left:438px;top:13px;width:3px;height:1px;background:#fff"></div>
<div class="t" style="left:416px;width:47px;text-align:right;top:4px;color:#ffb200;transform:scaleX(.9);transform-origin:100% 50%">-69</div>
</div>
<div class="a" style="left:3px;top:321px;width:1404px;height:21px;background:#1c1c1c;overflow:hidden">
<div class="a" style="left:0;top:0;width:19px;height:21px;background:#ff6347"></div>
<div class="cb" style="left:3px;top:4px"></div>
<svg class="a" style="left:3px;top:4px" width="13" height="13"><path d="M2.5 6.5 L5.5 9.5 L10.5 3.5" stroke="#333" stroke-width="1.4" fill="none"/></svg>
<div class="a" style="left:19px;top:0;width:1px;height:21px;background:#484848"></div>
<div class="a" style="left:149px;top:0;width:1px;height:21px;background:#484848"></div>
<div class="a" style="left:385px;top:0;width:1px;height:21px;background:#484848"></div>
<div class="a" style="left:467px;top:0;width:1px;height:21px;background:#484848"></div>
<div class="a" style="left:517px;top:0;width:1px;height:21px;background:#484848"></div>
<div class="a" style="left:643px;top:0;width:1px;height:21px;background:#484848"></div>
<div class="a" style="left:769px;top:0;width:1px;height:21px;background:#484848"></div>
<div class="a" style="left:863px;top:0;width:1px;height:21px;background:#484848"></div>
<div class="a" style="left:963px;top:0;width:1px;height:21px;background:#484848"></div>
<div class="a" style="left:1073px;top:0;width:1px;height:21px;background:#484848"></div>
<div class="a" style="left:1183px;top:0;width:1px;height:21px;background:#484848"></div>
<div class="a" style="left:1294px;top:0;width:1px;height:21px;background:#484848"></div>
<div class="a" style="left:1404px;top:0;width:1px;height:21px;background:#484848"></div>
<div class="t mac" style="left:23px;top:4px">00:11:32:75:90:34</div>
<div class="t cell" style="left:153px;top:4px">Xtreme24</div>
<div class="t cell" style="left:471px;top:4px">5</div>
<div class="t cell" style="left:521px;top:4px">Synology Incorporated</div>
<div class="t cell" style="left:647px;top:4px">RSNA-CCMP</div>
<div class="t cell" style="left:773px;top:4px">216 (N)</div>
<div class="t cell" style="left:867px;top:4px">Infrastructure</div>
<div class="t cell" style="left:967px;top:4px">14:07:26</div>
<div class="t cell" style="left:1077px;top:4px">14:08:13</div>
<div class="t cell" style="left:1187px;top:4px">0,000000</div>
<div class="t cell" style="left:1298px;top:4px">0,000000</div>
<div class="a" style="left:390px;top:11px;width:3px;height:1px;background:#e3da00"></div>
<div class="a" style="left:395px;top:16px;width:3px;height:1px;background:#ff8000"></div>
<div class="a" style="left:400px;top:16px;width:3px;height:1px;background:#ff7500"></div>
<div class="a" style="left:405px;top:15px;width:3px;height:1px;background:#ff8800"></div>
<div class="a" style="left:410px;top:13px;width:3px;height:1px;background:#ffaa00"></div>
<div class="a" style="left:415px;top:16px;width:3px;height:1px;background:#ff8000"></div>
<div class="a" style="left:420px;top:11px;width:3px;height:1px;background:#e3da00"></div>
<div class="a" style="left:425px;top:11px;width:3px;height:1px;background:#e3da00"></div>
<div class="a" style="left:430px;top:16px;width:3px;height:1px;background:#ff7500"></div>
<div class="a" style="left:435px;top:16px;width:3px;height:1px;background:#ff8000"></div>
<div class="a" style="left:438px;top:13px;width:3px;height:1px;background:#fff"></div>
<div class="t" style="left:416px;width:47px;text-align:right;top:4px;color:#ffaa00;transform:scaleX(.9);transform-origin:100% 50%">-70</div>
</div>
<div class="a" style="left:3px;top:343px;width:1404px;height:21px;background:#000;overflow:hidden">
<div class="a" style="left:0;top:0;width:19px;height:21px;background:#ffff00"></div>
<div class="cb" style="left:3px;top:4px"></div>
<svg class="a" style="left:3px;top:4px" width="13" height="13"><path d="M2.5 6.5 L5.5 9.5 L10.5 3.5" stroke="#333" stroke-width="1.4" fill="none"/></svg>
<div class="a" style="left:19px;top:0;width:1px;height:21px;background:#484848"></div>
<div class="a" style="left:149px;top:0;width:1px;height:21px;background:#484848"></div>
<div class="a" style="left:385px;top:0;width:1px;height:21px;background:#484848"></div>
<div class="a" style="left:467px;top:0;width:1px;height:21px;background:#484848"></div>
<div class="a" style="left:517px;top:0;width:1px;height:21px;background:#484848"></div>
<div class="a" style="left:643px;top:0;width:1px;height:21px;background:#484848"></div>
<div class="a" style="left:769px;top:0;width:1px;height:21px;background:#484848"></div>
<div class="a" style="left:863px;top:0;width:1px;height:21px;background:#484848"></div>
<div class="a" style="left:963px;top:0;width:1px;height:21px;background:#484848"></div>
<div class="a" style="left:1073px;top:0;width:1px;height:21px;background:#484848"></div>
<div class="a" style="left:1183px;top:0;width:1px;height:21px;background:#484848"></div>
<div class="a" style="left:1294px;top:0;width:1px;height:21px;background:#484848"></div>
<div class="a" style="left:1404px;top:0;width:1px;height:21px;background:#484848"></div>
<div class="t mac" style="left:23px;top:4px">04:42:1A:CD:C7:10</div>
<div class="t cell" style="left:153px;top:4px">ZenWiFi</div>
<div class="t cell" style="left:471px;top:4px">3</div>
<div class="t cell" style="left:647px;top:4px">9-CCMP</div>
<div class="t cell" style="left:773px;top:4px">600</div>
<div class="t cell" style="left:867px;top:4px">Infrastructure</div>
<div class="t cell" style="left:967px;top:4px">14:07:26</div>
<div class="t cell" style="left:1077px;top:4px">14:08:13</div>
<div class="t cell" style="left:1187px;top:4px">0,000000</div>
<div class="t cell" style="left:1298px;top:4px">0,000000</div>
<div class="a" style="left:390px;top:13px;width:4px;height:1px;background:#ffbb00"></div>
<div class="a" style="left:394px;top:14px;width:4px;height:1px;background:#ffa300"></div>
<div class="a" style="left:398px;top:13px;width:8px;height:1px;background:#ffaa00"></div>
<div class="a" style="left:406px;top:14px;width:5px;height:1px;background:#ffa300"></div>
<div class="a" style="left:411px;top:13px;width:5px;height:1px;background:#ffbb00"></div>
<div class="a" style="left:416px;top:13px;width:8px;height:1px;background:#ffbb00"></div>
<div class="a" style="left:424px;top:13px;width:5px;height:1px;background:#ffbb00"></div>
<div class="a" style="left:429px;top:13px;width:3px;height:1px;background:#ffaa00"></div>
<div class="a" style="left:432px;top:13px;width:3px;height:1px;background:#ffaa00"></div>
<div class="a" style="left:435px;top:14px;width:3px;height:1px;background:#ffa300"></div>
<div class="a" style="left:438px;top:13px;width:3px;height:1px;background:#fff"></div>
<div class="t" style="left:416px;width:47px;text-align:right;top:4px;color:#ffaa00;transform:scaleX(.9);transform-origin:100% 50%">-70</div>
</div>
<div class="a" style="left:3px;top:365px;width:1404px;height:21px;background:#1c1c1c;overflow:hidden">
<div class="a" style="left:0;top:0;width:19px;height:21px;background:#6b8e23"></div>
<div class="cb" style="left:3px;top:4px"></div>
<svg class="a" style="left:3px;top:4px" width="13" height="13"><path d="M2.5 6.5 L5.5 9.5 L10.5 3.5" stroke="#333" stroke-width="1.4" fill="none"/></svg>
<div class="a" style="left:19px;top:0;width:1px;height:21px;background:#484848"></div>
<div class="a" style="left:149px;top:0;width:1px;height:21px;background:#484848"></div>
<div class="a" style="left:385px;top:0;width:1px;height:21px;background:#484848"></div>
<div class="a" style="left:467px;top:0;width:1px;height:21px;background:#484848"></div>
<div class="a" style="left:517px;top:0;width:1px;height:21px;background:#484848"></div>
<div class="a" style="left:643px;top:0;width:1px;height:21px;background:#484848"></div>
<div class="a" style="left:769px;top:0;width:1px;height:21px;background:#484848"></div>
<div class="a" style="left:863px;top:0;width:1px;height:21px;background:#484848"></div>
<div class="a" style="left:963px;top:0;width:1px;height:21px;background:#484848"></div>
<div class="a" style="left:1073px;top:0;width:1px;height:21px;background:#484848"></div>
<div class="a" style="left:1183px;top:0;width:1px;height:21px;background:#484848"></div>
<div class="a" style="left:1294px;top:0;width:1px;height:21px;background:#484848"></div>
<div class="a" style="left:1404px;top:0;width:1px;height:21px;background:#484848"></div>
<div class="t mac" style="left:23px;top:4px">34:2C:C4:AD:23:F5</div>
<div class="t cell" style="left:153px;top:4px">UPC3389654</div>
<div class="t cell" style="left:471px;top:4px">1</div>
<div class="t cell" style="left:647px;top:4px">RSNA-CCMP</div>
<div class="t cell" style="left:773px;top:4px">144 (N)</div>
<div class="t cell" style="left:867px;top:4px">Infrastructure</div>
<div class="t cell" style="left:967px;top:4px">14:07:26</div>
<div class="t cell" style="left:1077px;top:4px">14:08:13</div>
<div class="t cell" style="left:1187px;top:4px">0,000000</div>
<div class="t cell" style="left:1298px;top:4px">0,000000</div>
<div class="a" style="left:390px;top:18px;width:3px;height:1px;background:#ff3300"></div>
<div class="a" style="left:395px;top:14px;width:3px;height:1px;background:#ffa700"></div>
<div class="a" style="left:400px;top:13px;width:3px;height:1px;background:#ffaa00"></div>
<div class="a" style="left:405px;top:16px;width:3px;height:1px;background:#ff8000"></div>
<div class="a" style="left:410px;top:13px;width:3px;height:1px;background:#ffb200"></div>
<div class="a" style="left:415px;top:13px;width:3px;height:1px;background:#ffb200"></div>
<div class="a" style="left:420px;top:18px;width:3px;height:1px;background:#ff3900"></div>
<div class="a" style="left:425px;top:16px;width:3px;height:1px;background:#ff8000"></div>
<div class="a" style="left:430px;top:13px;width:3px;height:1px;background:#ffaa00"></div>
<div class="a" style="left:435px;top:18px;width:3px;height:1px;background:#ff3e00"></div>
<div class="a" style="left:438px;top:16px;width:3px;height:1px;background:#fff"></div>
<div class="t" style="left:416px;width:47px;text-align:right;top:4px;color:#ff8000;transform:scaleX(.9);transform-origin:100% 50%">-78</div>
</div>
<div class="a" style="left:3px;top:387px;width:1404px;height:21px;background:#000;overflow:hidden">
<div class="a" style="left:0;top:0;width:19px;height:21px;background:#bdb76b"></div>
<div class="cb" style="left:3px;top:4px"></div>
<svg class="a" style="left:3px;top:4px" width="13" height="13"><path d="M2.5 6.5 L5.5 9.5 L10.5 3.5" stroke="#333" stroke-width="1.4" fill="none"/></svg>
<div class="a" style="left:19px;top:0;width:1px;height:21px;background:#484848"></div>
<div class="a" style="left:149px;top:0;width:1px;height:21px;background:#484848"></div>
<div class="a" style="left:385px;top:0;width:1px;height:21px;background:#484848"></div>
<div class="a" style="left:467px;top:0;width:1px;height:21px;background:#484848"></div>
<div class="a" style="left:517px;top:0;width:1px;height:21px;background:#484848"></div>
<div class="a" style="left:643px;top:0;width:1px;height:21px;background:#484848"></div>
<div class="a" style="left:769px;top:0;width:1px;height:21px;background:#484848"></div>
<div class="a" style="left:863px;top:0;width:1px;height:21px;background:#484848"></div>
<div class="a" style="left:963px;top:0;width:1px;height:21px;background:#484848"></div>
<div class="a" style="left:1073px;top:0;width:1px;height:21px;background:#484848"></div>
<div class="a" style="left:1183px;top:0;width:1px;height:21px;background:#484848"></div>
<div class="a" style="left:1294px;top:0;width:1px;height:21px;background:#484848"></div>
<div class="a" style="left:1404px;top:0;width:1px;height:21px;background:#484848"></div>
<div class="t mac" style="left:23px;top:4px">34:2C:C4:70:95:5D</div>
<div class="t cell" style="left:153px;top:4px">UPC3972776</div>
<div class="t cell" style="left:471px;top:4px">60</div>
<div class="t cell" style="left:647px;top:4px">RSNA-CCMP</div>
<div class="t cell" style="left:773px;top:4px">450</div>
<div class="t cell" style="left:867px;top:4px">Infrastructure</div>
<div class="t cell" style="left:967px;top:4px">14:07:29</div>
<div class="t cell" style="left:1077px;top:4px">14:08:13</div>
<div class="t cell" style="left:1187px;top:4px">0,000000</div>
<div class="t cell" style="left:1298px;top:4px">0,000000</div>
<div class="a" style="left:393px;top:19px;width:45px;height:1px;background:#ff2500"></div>
<div class="a" style="left:438px;top:19px;width:3px;height:1px;background:#fff"></div>
<div class="t" style="left:416px;width:47px;text-align:right;top:4px;color:#ff2500;transform:scaleX(.9);transform-origin:100% 50%">-91</div>
</div>
<div class="a" style="left:3px;top:409px;width:1404px;height:21px;background:#1c1c1c;overflow:hidden">
<div class="a" style="left:0;top:0;width:19px;height:21px;background:#ff0000"></div>
<div class="cb" style="left:3px;top:4px"></div>
<svg class="a" style="left:3px;top:4px" width="13" height="13"><path d="M2.5 6.5 L5.5 9.5 L10.5 3.5" stroke="#333" stroke-width="1.4" fill="none"/></svg>
<div class="a" style="left:19px;top:0;width:1px;height:21px;background:#484848"></div>
<div class="a" style="left:149px;top:0;width:1px;height:21px;background:#484848"></div>
<div class="a" style="left:385px;top:0;width:1px;height:21px;background:#484848"></div>
<div class="a" style="left:467px;top:0;width:1px;height:21px;background:#484848"></div>
<div class="a" style="left:517px;top:0;width:1px;height:21px;background:#484848"></div>
<div class="a" style="left:643px;top:0;width:1px;height:21px;background:#484848"></div>
<div class="a" style="left:769px;top:0;width:1px;height:21px;background:#484848"></div>
<div class="a" style="left:863px;top:0;width:1px;height:21px;background:#484848"></div>
<div class="a" style="left:963px;top:0;width:1px;height:21px;background:#484848"></div>
<div class="a" style="left:1073px;top:0;width:1px;height:21px;background:#484848"></div>
<div class="a" style="left:1183px;top:0;width:1px;height:21px;background:#484848"></div>
<div class="a" style="left:1294px;top:0;width:1px;height:21px;background:#484848"></div>
<div class="a" style="left:1404px;top:0;width:1px;height:21px;background:#484848"></div>
<div class="t mac" style="left:23px;top:4px">02:11:32:75:90:37</div>
<div class="t cell" style="left:153px;top:4px">Xguest50</div>
<div class="t cell" style="left:471px;top:4px">44</div>
<div class="t cell" style="left:647px;top:4px">RSNA-CCMP</div>
<div class="t cell" style="left:773px;top:4px">450</div>
<div class="t cell" style="left:867px;top:4px">Infrastructure</div>
<div class="t cell" style="left:967px;top:4px">14:07:29</div>
<div class="t cell" style="left:1077px;top:4px">14:08:13</div>
<div class="t cell" style="left:1187px;top:4px">0,000000</div>
<div class="t cell" style="left:1298px;top:4px">0,000000</div>
<div class="a" style="left:393px;top:19px;width:4px;height:1px;background:#ff2c00"></div>
<div class="a" style="left:397px;top:19px;width:3px;height:1px;background:#ff2c00"></div>
<div class="a" style="left:400px;top:19px;width:6px;height:1px;background:#ff2c00"></div>
<div class="a" style="left:406px;top:19px;width:5px;height:1px;background:#ff2900"></div>
<div class="a" style="left:411px;top:19px;width:4px;height:1px;background:#ff2500"></div>
<div class="a" style="left:415px;top:19px;width:5px;height:1px;background:#ff2500"></div>
<div class="a" style="left:420px;top:19px;width:4px;height:1px;background:#ff2500"></div>
<div class="a" style="left:424px;top:20px;width:10px;height:1px;background:#ff1e00"></div>
<div class="a" style="left:434px;top:19px;width:4px;height:1px;background:#ff2500"></div>
<div class="a" style="left:438px;top:19px;width:3px;height:1px;background:#fff"></div>
<div class="t" style="left:416px;width:47px;text-align:right;top:4px;color:#ff2500;transform:scaleX(.9);transform-origin:100% 50%">-91</div>
</div>
<div class="a" style="left:3px;top:431px;width:1404px;height:21px;background:#000;overflow:hidden">
<div class="a" style="left:0;top:0;width:19px;height:21px;background:#32cd32"></div>
<div class="cb" style="left:3px;top:4px"></div>
<svg class="a" style="left:3px;top:4px" width="13" height="13"><path d="M2.5 6.5 L5.5 9.5 L10.5 3.5" stroke="#333" stroke-width="1.4" fill="none"/></svg>
<div class="a" style="left:19px;top:0;width:1px;height:21px;background:#484848"></div>
<div class="a" style="left:149px;top:0;width:1px;height:21px;background:#484848"></div>
<div class="a" style="left:385px;top:0;width:1px;height:21px;background:#484848"></div>
<div class="a" style="left:467px;top:0;width:1px;height:21px;background:#484848"></div>
<div class="a" style="left:517px;top:0;width:1px;height:21px;background:#484848"></div>
<div class="a" style="left:643px;top:0;width:1px;height:21px;background:#484848"></div>
<div class="a" style="left:769px;top:0;width:1px;height:21px;background:#484848"></div>
<div class="a" style="left:863px;top:0;width:1px;height:21px;background:#484848"></div>
<div class="a" style="left:963px;top:0;width:1px;height:21px;background:#484848"></div>
<div class="a" style="left:1073px;top:0;width:1px;height:21px;background:#484848"></div>
<div class="a" style="left:1183px;top:0;width:1px;height:21px;background:#484848"></div>
<div class="a" style="left:1294px;top:0;width:1px;height:21px;background:#484848"></div>
<div class="a" style="left:1404px;top:0;width:1px;height:21px;background:#484848"></div>
<div class="t mac" style="left:23px;top:4px">00:11:32:75:90:35</div>
<div class="t cell" style="left:153px;top:4px">Xtreme50</div>
<div class="t cell" style="left:471px;top:4px">44</div>
<div class="t cell" style="left:521px;top:4px">Synology Incorporated</div>
<div class="t cell" style="left:647px;top:4px">RSNA-CCMP</div>
<div class="t cell" style="left:773px;top:4px">450</div>
<div class="t cell" style="left:867px;top:4px">Infrastructure</div>
<div class="t cell" style="left:967px;top:4px">14:07:29</div>
<div class="t cell" style="left:1077px;top:4px">14:08:13</div>
<div class="t cell" style="left:1187px;top:4px">0,000000</div>
<div class="t cell" style="left:1298px;top:4px">0,000000</div>
<div class="a" style="left:393px;top:19px;width:5px;height:1px;background:#ff2500"></div>
<div class="a" style="left:398px;top:20px;width:3px;height:1px;background:#ff2200"></div>
<div class="a" style="left:401px;top:19px;width:3px;height:1px;background:#ff2500"></div>
<div class="a" style="left:404px;top:19px;width:8px;height:1px;background:#ff2500"></div>
<div class="a" style="left:412px;top:19px;width:10px;height:1px;background:#ff2c00"></div>
<div class="a" style="left:422px;top:19px;width:5px;height:1px;background:#ff2c00"></div>
<div class="a" style="left:427px;top:19px;width:5px;height:1px;background:#ff2900"></div>
<div class="a" style="left:432px;top:20px;width:3px;height:1px;background:#ff2200"></div>
<div class="a" style="left:435px;top:19px;width:3px;height:1px;background:#ff2500"></div>
<div class="a" style="left:438px;top:19px;width:3px;height:1px;background:#fff"></div>
<div class="t" style="left:416px;width:47px;text-align:right;top:4px;color:#ff2500;transform:scaleX(.9);transform-origin:100% 50%">-91</div>
</div>
<div class="a" style="left:3px;top:453px;width:1404px;height:21px;background:#1c1c1c;overflow:hidden">
<div class="a" style="left:0;top:0;width:19px;height:21px;background:#4169e1"></div>
<div class="cb" style="left:3px;top:4px"></div>
<svg class="a" style="left:3px;top:4px" width="13" height="13"><path d="M2.5 6.5 L5.5 9.5 L10.5 3.5" stroke="#333" stroke-width="1.4" fill="none"/></svg>
<div class="a" style="left:19px;top:0;width:1px;height:21px;background:#484848"></div>
<div class="a" style="left:149px;top:0;width:1px;height:21px;background:#484848"></div>
<div class="a" style="left:385px;top:0;width:1px;height:21px;background:#484848"></div>
<div class="a" style="left:467px;top:0;width:1px;height:21px;background:#484848"></div>
<div class="a" style="left:517px;top:0;width:1px;height:21px;background:#484848"></div>
<div class="a" style="left:643px;top:0;width:1px;height:21px;background:#484848"></div>
<div class="a" style="left:769px;top:0;width:1px;height:21px;background:#484848"></div>
<div class="a" style="left:863px;top:0;width:1px;height:21px;background:#484848"></div>
<div class="a" style="left:963px;top:0;width:1px;height:21px;background:#484848"></div>
<div class="a" style="left:1073px;top:0;width:1px;height:21px;background:#484848"></div>
<div class="a" style="left:1183px;top:0;width:1px;height:21px;background:#484848"></div>
<div class="a" style="left:1294px;top:0;width:1px;height:21px;background:#484848"></div>
<div class="a" style="left:1404px;top:0;width:1px;height:21px;background:#484848"></div>
<div class="t mac" style="left:23px;top:4px">78:98:E8:25:25:0F</div>
<div class="t cell" style="left:153px;top:4px">dlink-250D-5GHz</div>
<div class="t cell" style="left:471px;top:4px">36</div>
<div class="t cell" style="left:647px;top:4px">RSNA-CCMP</div>
<div class="t cell" style="left:773px;top:4px">150</div>
<div class="t cell" style="left:867px;top:4px">Infrastructure</div>
<div class="t cell" style="left:967px;top:4px">14:07:29</div>
<div class="t cell" style="left:1077px;top:4px">14:08:13</div>
<div class="t cell" style="left:1187px;top:4px">0,000000</div>
<div class="t cell" style="left:1298px;top:4px">0,000000</div>
<div class="a" style="left:393px;top:19px;width:45px;height:1px;background:#ff2900"></div>
<div class="a" style="left:438px;top:19px;width:3px;height:1px;background:#fff"></div>
<div class="t" style="left:416px;width:47px;text-align:right;top:4px;color:#ff2900;transform:scaleX(.9);transform-origin:100% 50%">-90</div>
</div>
<div class="a" style="left:3px;top:475px;width:1404px;height:21px;background:#000;overflow:hidden">
<div class="a" style="left:0;top:0;width:19px;height:21px;background:#ffa500"></div>
<div class="cb" style="left:3px;top:4px"></div>
<svg class="a" style="left:3px;top:4px" width="13" height="13"><path d="M2.5 6.5 L5.5 9.5 L10.5 3.5" stroke="#333" stroke-width="1.4" fill="none"/></svg>
<div class="a" style="left:19px;top:0;width:1px;height:21px;background:#484848"></div>
<div class="a" style="left:149px;top:0;width:1px;height:21px;background:#484848"></div>
<div class="a" style="left:385px;top:0;width:1px;height:21px;background:#484848"></div>
<div class="a" style="left:467px;top:0;width:1px;height:21px;background:#484848"></div>
<div class="a" style="left:517px;top:0;width:1px;height:21px;background:#484848"></div>
<div class="a" style="left:643px;top:0;width:1px;height:21px;background:#484848"></div>
<div class="a" style="left:769px;top:0;width:1px;height:21px;background:#484848"></div>
<div class="a" style="left:863px;top:0;width:1px;height:21px;background:#484848"></div>
<div class="a" style="left:963px;top:0;width:1px;height:21px;background:#484848"></div>
<div class="a" style="left:1073px;top:0;width:1px;height:21px;background:#484848"></div>
<div class="a" style="left:1183px;top:0;width:1px;height:21px;background:#484848"></div>
<div class="a" style="left:1294px;top:0;width:1px;height:21px;background:#484848"></div>
<div class="a" style="left:1404px;top:0;width:1px;height:21px;background:#484848"></div>
<div class="t mac" style="left:23px;top:4px">28:EE:52:D6:3F:3E</div>
<div class="t cell" style="left:153px;top:4px">oTc Net</div>
<div class="t cell" style="left:471px;top:4px">8</div>
<div class="t cell" style="left:647px;top:4px">RSNA-CCMP</div>
<div class="t cell" style="left:773px;top:4px">216 (N)</div>
<div class="t cell" style="left:867px;top:4px">Infrastructure</div>
<div class="t cell" style="left:967px;top:4px">14:07:29</div>
<div class="t cell" style="left:1077px;top:4px">14:08:13</div>
<div class="t cell" style="left:1187px;top:4px">0,000000</div>
<div class="t cell" style="left:1298px;top:4px">0,000000</div>
<div class="a" style="left:393px;top:17px;width:45px;height:1px;background:#ff4400"></div>
<div class="a" style="left:438px;top:17px;width:3px;height:1px;background:#fff"></div>
<div class="t" style="left:416px;width:47px;text-align:right;top:4px;color:#ff4400;transform:scaleX(.9);transform-origin:100% 50%">-84</div>
</div>
<div class="a" style="left:3px;top:497px;width:1404px;height:21px;background:#1c1c1c;overflow:hidden">
<div class="a" style="left:0;top:0;width:19px;height:21px;background:#d2b48c"></div>
<div class="cb" style="left:3px;top:4px"></div>
<svg class="a" style="left:3px;top:4px" width="13" height="13"><path d="M2.5 6.5 L5.5 9.5 L10.5 3.5" stroke="#333" stroke-width="1.4" fill="none"/></svg>
<div class="a" style="left:19px;top:0;width:1px;height:21px;background:#484848"></div>
<div class="a" style="left:149px;top:0;width:1px;height:21px;background:#484848"></div>
<div class="a" style="left:385px;top:0;width:1px;height:21px;background:#484848"></div>
<div class="a" style="left:467px;top:0;width:1px;height:21px;background:#484848"></div>
<div class="a" style="left:517px;top:0;width:1px;height:21px;background:#484848"></div>
<div class="a" style="left:643px;top:0;width:1px;height:21px;background:#484848"></div>
<div class="a" style="left:769px;top:0;width:1px;height:21px;background:#484848"></div>
<div class="a" style="left:863px;top:0;width:1px;height:21px;background:#484848"></div>
<div class="a" style="left:963px;top:0;width:1px;height:21px;background:#484848"></div>
<div class="a" style="left:1073px;top:0;width:1px;height:21px;background:#484848"></div>
<div class="a" style="left:1183px;top:0;width:1px;height:21px;background:#484848"></div>
<div class="a" style="left:1294px;top:0;width:1px;height:21px;background:#484848"></div>
<div class="a" style="left:1404px;top:0;width:1px;height:21px;background:#484848"></div>
<div class="t mac" style="left:23px;top:4px">34:2C:C4:AD:23:EB</div>
<div class="t cell" style="left:153px;top:4px">UPC3389654</div>
<div class="t cell" style="left:471px;top:4px">36</div>
<div class="t cell" style="left:647px;top:4px">RSNA-CCMP</div>
<div class="t cell" style="left:773px;top:4px">450</div>
<div class="t cell" style="left:867px;top:4px">Infrastructure</div>
<div class="t cell" style="left:967px;top:4px">14:07:29</div>
<div class="t cell" style="left:1077px;top:4px">14:08:13</div>
<div class="t cell" style="left:1187px;top:4px">0,000000</div>
<div class="t cell" style="left:1298px;top:4px">0,000000</div>
<div class="a" style="left:393px;top:16px;width:8px;height:1px;background:#ff6000"></div>
<div class="a" style="left:401px;top:17px;width:8px;height:1px;background:#ff5500"></div>
<div class="a" style="left:409px;top:16px;width:6px;height:1px;background:#ff6000"></div>
<div class="a" style="left:415px;top:16px;width:4px;height:1px;background:#ff6000"></div>
<div class="a" style="left:419px;top:17px;width:10px;height:1px;background:#ff5500"></div>
<div class="a" style="left:429px;top:16px;width:4px;height:1px;background:#ff6a00"></div>
<div class="a" style="left:433px;top:17px;width:5px;height:1px;background:#ff5500"></div>
<div class="a" style="left:438px;top:17px;width:3px;height:1px;background:#fff"></div>
<div class="t" style="left:416px;width:47px;text-align:right;top:4px;color:#ff5500;transform:scaleX(.9);transform-origin:100% 50%">-82</div>
</div>
<div class="a" style="left:3px;top:519px;width:1404px;height:21px;background:#000;overflow:hidden">
<div class="a" style="left:0;top:0;width:19px;height:21px;background:#808080"></div>
<div class="cb" style="left:3px;top:4px"></div>
<svg class="a" style="left:3px;top:4px" width="13" height="13"><path d="M2.5 6.5 L5.5 9.5 L10.5 3.5" stroke="#333" stroke-width="1.4" fill="none"/></svg>
<div class="a" style="left:19px;top:0;width:1px;height:21px;background:#484848"></div>
<div class="a" style="left:149px;top:0;width:1px;height:21px;background:#484848"></div>
<div class="a" style="left:385px;top:0;width:1px;height:21px;background:#484848"></div>
<div class="a" style="left:467px;top:0;width:1px;height:21px;background:#484848"></div>
<div class="a" style="left:517px;top:0;width:1px;height:21px;background:#484848"></div>
<div class="a" style="left:643px;top:0;width:1px;height:21px;background:#484848"></div>
<div class="a" style="left:769px;top:0;width:1px;height:21px;background:#484848"></div>
<div class="a" style="left:863px;top:0;width:1px;height:21px;background:#484848"></div>
<div class="a" style="left:963px;top:0;width:1px;height:21px;background:#484848"></div>
<div class="a" style="left:1073px;top:0;width:1px;height:21px;background:#484848"></div>
<div class="a" style="left:1183px;top:0;width:1px;height:21px;background:#484848"></div>
<div class="a" style="left:1294px;top:0;width:1px;height:21px;background:#484848"></div>
<div class="a" style="left:1404px;top:0;width:1px;height:21px;background:#484848"></div>
<div class="t mac" style="left:23px;top:4px">88:F7:C7:44:06:E1</div>
<div class="t cell" style="left:153px;top:4px">UPC2552434</div>
<div class="t cell" style="left:471px;top:4px">1</div>
<div class="t cell" style="left:647px;top:4px">RSNA-CCMP</div>
<div class="t cell" style="left:773px;top:4px">144 (N)</div>
<div class="t cell" style="left:867px;top:4px">Infrastructure</div>
<div class="t cell" style="left:967px;top:4px">14:07:29</div>
<div class="t cell" style="left:1077px;top:4px">14:08:13</div>
<div class="t cell" style="left:1187px;top:4px">0,000000</div>
<div class="t cell" style="left:1298px;top:4px">0,000000</div>
<div class="a" style="left:393px;top:18px;width:4px;height:1px;background:#ff3e00"></div>
<div class="a" style="left:397px;top:17px;width:3px;height:1px;background:#ff4c00"></div>
<div class="a" style="left:400px;top:17px;width:4px;height:1px;background:#ff4c00"></div>
<div class="a" style="left:404px;top:17px;width:4px;height:1px;background:#ff4c00"></div>
<div class="a" style="left:408px;top:17px;width:10px;height:1px;background:#ff5500"></div>
<div class="a" style="left:418px;top:17px;width:6px;height:1px;background:#ff4c00"></div>
<div class="a" style="left:424px;top:17px;width:8px;height:1px;background:#ff4c00"></div>
<div class="a" style="left:432px;top:17px;width:3px;height:1px;background:#ff4400"></div>
<div class="a" style="left:435px;top:18px;width:3px;height:1px;background:#ff3e00"></div>
<div class="a" style="left:438px;top:17px;width:3px;height:1px;background:#fff"></div>
<div class="t" style="left:416px;width:47px;text-align:right;top:4px;color:#ff4c00;transform:scaleX(.9);transform-origin:100% 50%">-83</div>
</div>
<div class="a" style="left:3px;top:541px;width:1404px;height:21px;background:#1c1c1c;overflow:hidden">
<div class="a" style="left:0;top:0;width:19px;height:21px;background:#ffc0cb"></div>
<div class="cb" style="left:3px;top:4px"></div>
<svg class="a" style="left:3px;top:4px" width="13" height="13"><path d="M2.5 6.5 L5.5 9.5 L10.5 3.5" stroke="#333" stroke-width="1.4" fill="none"/></svg>
<div class="a" style="left:19px;top:0;width:1px;height:21px;background:#484848"></div>
<div class="a" style="left:149px;top:0;width:1px;height:21px;background:#484848"></div>
<div class="a" style="left:385px;top:0;width:1px;height:21px;background:#484848"></div>
<div class="a" style="left:467px;top:0;width:1px;height:21px;background:#484848"></div>
<div class="a" style="left:517px;top:0;width:1px;height:21px;background:#484848"></div>
<div class="a" style="left:643px;top:0;width:1px;height:21px;background:#484848"></div>
<div class="a" style="left:769px;top:0;width:1px;height:21px;background:#484848"></div>
<div class="a" style="left:863px;top:0;width:1px;height:21px;background:#484848"></div>
<div class="a" style="left:963px;top:0;width:1px;height:21px;background:#484848"></div>
<div class="a" style="left:1073px;top:0;width:1px;height:21px;background:#484848"></div>
<div class="a" style="left:1183px;top:0;width:1px;height:21px;background:#484848"></div>
<div class="a" style="left:1294px;top:0;width:1px;height:21px;background:#484848"></div>
<div class="a" style="left:1404px;top:0;width:1px;height:21px;background:#484848"></div>
<div class="t mac" style="left:23px;top:4px">24:4B:FE:1B:BC:68</div>
<div class="t cell" style="left:153px;top:4px">SH2048V.24</div>
<div class="t cell" style="left:471px;top:4px">1</div>
<div class="t cell" style="left:647px;top:4px">RSNA-CCMP</div>
<div class="t cell" style="left:773px;top:4px">288 (N)</div>
<div class="t cell" style="left:867px;top:4px">Infrastructure</div>
<div class="t cell" style="left:967px;top:4px">14:07:31</div>
<div class="t cell" style="left:1077px;top:4px">14:08:13</div>
<div class="t cell" style="left:1187px;top:4px">0,000000</div>
<div class="t cell" style="left:1298px;top:4px">0,000000</div>
<div class="a" style="left:395px;top:16px;width:5px;height:1px;background:#ff6000"></div>
<div class="a" style="left:400px;top:17px;width:4px;height:1px;background:#ff5500"></div>
<div class="a" style="left:404px;top:17px;width:5px;height:1px;background:#ff4400"></div>
<div class="a" style="left:409px;top:17px;width:6px;height:1px;background:#ff5500"></div>
<div class="a" style="left:415px;top:16px;width:4px;height:1px;background:#ff6000"></div>
<div class="a" style="left:419px;top:17px;width:3px;height:1px;background:#ff4400"></div>
<div class="a" style="left:422px;top:17px;width:10px;height:1px;background:#ff5500"></div>
<div class="a" style="left:432px;top:17px;width:5px;height:1px;background:#ff5500"></div>
<div class="a" style="left:437px;top:17px;width:1px;height:1px;background:#ff4400"></div>
<div class="a" style="left:438px;top:17px;width:3px;height:1px;background:#fff"></div>
<div class="t" style="left:416px;width:47px;text-align:right;top:4px;color:#ff5500;transform:scaleX(.9);transform-origin:100% 50%">-82</div>
</div>
<div class="a" style="left:3px;top:563px;width:1404px;height:21px;background:#000;overflow:hidden">
<div class="a" style="left:0;top:0;width:19px;height:21px;background:#800000"></div>
<div class="cb" style="left:3px;top:4px"></div>
<svg class="a" style="left:3px;top:4px" width="13" height="13"><path d="M2.5 6.5 L5.5 9.5 L10.5 3.5" stroke="#333" stroke-width="1.4" fill="none"/></svg>
<div class="a" style="left:19px;top:0;width:1px;height:21px;background:#484848"></div>
<div class="a" style="left:149px;top:0;width:1px;height:21px;background:#484848"></div>
<div class="a" style="left:385px;top:0;width:1px;height:21px;background:#484848"></div>
<div class="a" style="left:467px;top:0;width:1px;height:21px;background:#484848"></div>
<div class="a" style="left:517px;top:0;width:1px;height:21px;background:#484848"></div>
<div class="a" style="left:643px;top:0;width:1px;height:21px;background:#484848"></div>
<div class="a" style="left:769px;top:0;width:1px;height:21px;background:#484848"></div>
<div class="a" style="left:863px;top:0;width:1px;height:21px;background:#484848"></div>
<div class="a" style="left:963px;top:0;width:1px;height:21px;background:#484848"></div>
<div class="a" style="left:1073px;top:0;width:1px;height:21px;background:#484848"></div>
<div class="a" style="left:1183px;top:0;width:1px;height:21px;background:#484848"></div>
<div class="a" style="left:1294px;top:0;width:1px;height:21px;background:#484848"></div>
<div class="a" style="left:1404px;top:0;width:1px;height:21px;background:#484848"></div>
<div class="t mac" style="left:23px;top:4px">D4:CA:6D:E0:76:FF</div>
<div class="t cell" style="left:153px;top:4px">ekonomik</div>
<div class="t cell" style="left:471px;top:4px">8 + 12</div>
<div class="t cell" style="left:647px;top:4px">RSNA-CCMP</div>
<div class="t cell" style="left:773px;top:4px">300 (N)</div>
<div class="t cell" style="left:867px;top:4px">Infrastructure</div>
<div class="t cell" style="left:967px;top:4px">14:07:31</div>
<div class="t cell" style="left:1077px;top:4px">14:08:13</div>
<div class="t cell" style="left:1187px;top:4px">0,000000</div>
<div class="t cell" style="left:1298px;top:4px">0,000000</div>
<div class="a" style="left:395px;top:17px;width:8px;height:1px;background:#ff5500"></div>
<div class="a" style="left:403px;top:17px;width:4px;height:1px;background:#ff4c00"></div>
<div class="a" style="left:407px;top:17px;width:3px;height:1px;background:#ff4c00"></div>
<div class="a" style="left:410px;top:17px;width:5px;height:1px;background:#ff4c00"></div>
<div class="a" style="left:415px;top:17px;width:4px;height:1px;background:#ff4c00"></div>
<div class="a" style="left:419px;top:17px;width:4px;height:1px;background:#ff4c00"></div>
<div class="a" style="left:423px;top:17px;width:4px;height:1px;background:#ff4c00"></div>
<div class="a" style="left:427px;top:17px;width:10px;height:1px;background:#ff4c00"></div>
<div class="a" style="left:437px;top:17px;width:1px;height:1px;background:#ff4c00"></div>
<div class="a" style="left:438px;top:17px;width:3px;height:1px;background:#fff"></div>
<div class="t" style="left:416px;width:47px;text-align:right;top:4px;color:#ff4c00;transform:scaleX(.9);transform-origin:100% 50%">-83</div>
</div>
<div class="a" style="left:3px;top:585px;width:1404px;height:21px;background:#1c1c1c;overflow:hidden">
<div class="a" style="left:0;top:0;width:19px;height:21px;background:#fa8072"></div>
<div class="cb" style="left:3px;top:4px"></div>
<svg class="a" style="left:3px;top:4px" width="13" height="13"><path d="M2.5 6.5 L5.5 9.5 L10.5 3.5" stroke="#333" stroke-width="1.4" fill="none"/></svg>
<div class="a" style="left:19px;top:0;width:1px;height:21px;background:#484848"></div>
<div class="a" style="left:149px;top:0;width:1px;height:21px;background:#484848"></div>
<div class="a" style="left:385px;top:0;width:1px;height:21px;background:#484848"></div>
<div class="a" style="left:467px;top:0;width:1px;height:21px;background:#484848"></div>
<div class="a" style="left:517px;top:0;width:1px;height:21px;background:#484848"></div>
<div class="a" style="left:643px;top:0;width:1px;height:21px;background:#484848"></div>
<div class="a" style="left:769px;top:0;width:1px;height:21px;background:#484848"></div>
<div class="a" style="left:863px;top:0;width:1px;height:21px;background:#484848"></div>
<div class="a" style="left:963px;top:0;width:1px;height:21px;background:#484848"></div>
<div class="a" style="left:1073px;top:0;width:1px;height:21px;background:#484848"></div>
<div class="a" style="left:1183px;top:0;width:1px;height:21px;background:#484848"></div>
<div class="a" style="left:1294px;top:0;width:1px;height:21px;background:#484848"></div>
<div class="a" style="left:1404px;top:0;width:1px;height:21px;background:#484848"></div>
<div class="t mac" style="left:23px;top:4px">34:2C:C4:70:95:78</div>
<div class="t cell" style="left:153px;top:4px">UPC3972776</div>
<div class="t cell" style="left:471px;top:4px">11</div>
<div class="t cell" style="left:647px;top:4px">RSNA-CCMP</div>
<div class="t cell" style="left:773px;top:4px">144 (N)</div>
<div class="t cell" style="left:867px;top:4px">Infrastructure</div>
<div class="t cell" style="left:967px;top:4px">14:07:33</div>
<div class="t cell" style="left:1077px;top:4px">14:08:13</div>
<div class="t cell" style="left:1187px;top:4px">0,000000</div>
<div class="t cell" style="left:1298px;top:4px">0,000000</div>
<div class="a" style="left:398px;top:14px;width:3px;height:1px;background:#ffa000"></div>
<div class="a" style="left:401px;top:15px;width:5px;height:1px;background:#ff9900"></div>
<div class="a" style="left:406px;top:14px;width:6px;height:1px;background:#ff9c00"></div>
<div class="a" style="left:412px;top:14px;width:8px;height:1px;background:#ff9c00"></div>
<div class="a" style="left:420px;top:15px;width:3px;height:1px;background:#ff9900"></div>
<div class="a" style="left:423px;top:14px;width:6px;height:1px;background:#ff9c00"></div>
<div class="a" style="left:429px;top:15px;width:3px;height:1px;background:#ff8800"></div>
<div class="a" style="left:432px;top:15px;width:6px;height:1px;background:#ff9900"></div>
<div class="a" style="left:438px;top:15px;width:3px;height:1px;background:#fff"></div>
<div class="t" style="left:416px;width:47px;text-align:right;top:4px;color:#ff9900;transform:scaleX(.9);transform-origin:100% 50%">-75</div>
</div>
<div class="a" style="left:3px;top:607px;width:1404px;height:21px;background:#000;overflow:hidden">
<div class="a" style="left:0;top:0;width:19px;height:21px;background:#40e0d0"></div>
<div class="cb" style="left:3px;top:4px"></div>
<svg class="a" style="left:3px;top:4px" width="13" height="13"><path d="M2.5 6.5 L5.5 9.5 L10.5 3.5" stroke="#333" stroke-width="1.4" fill="none"/></svg>
<div class="a" style="left:19px;top:0;width:1px;height:21px;background:#484848"></div>
<div class="a" style="left:149px;top:0;width:1px;height:21px;background:#484848"></div>
<div class="a" style="left:385px;top:0;width:1px;height:21px;background:#484848"></div>
<div class="a" style="left:467px;top:0;width:1px;height:21px;background:#484848"></div>
<div class="a" style="left:517px;top:0;width:1px;height:21px;background:#484848"></div>
<div class="a" style="left:643px;top:0;width:1px;height:21px;background:#484848"></div>
<div class="a" style="left:769px;top:0;width:1px;height:21px;background:#484848"></div>
<div class="a" style="left:863px;top:0;width:1px;height:21px;background:#484848"></div>
<div class="a" style="left:963px;top:0;width:1px;height:21px;background:#484848"></div>
<div class="a" style="left:1073px;top:0;width:1px;height:21px;background:#484848"></div>
<div class="a" style="left:1183px;top:0;width:1px;height:21px;background:#484848"></div>
<div class="a" style="left:1294px;top:0;width:1px;height:21px;background:#484848"></div>
<div class="a" style="left:1404px;top:0;width:1px;height:21px;background:#484848"></div>
<div class="t mac" style="left:23px;top:4px">24:4B:FE:1B:BC:69</div>
<div class="t cell" style="left:153px;top:4px">Odyssey_2G_Guest</div>
<div class="t cell" style="left:471px;top:4px">1</div>
<div class="t cell" style="left:647px;top:4px">RSNA-CCMP</div>
<div class="t cell" style="left:773px;top:4px">288 (N)</div>
<div class="t cell" style="left:867px;top:4px">Infrastructure</div>
<div class="t cell" style="left:967px;top:4px">14:07:35</div>
<div class="t cell" style="left:1077px;top:4px">14:08:13</div>
<div class="t cell" style="left:1187px;top:4px">0,000000</div>
<div class="t cell" style="left:1298px;top:4px">0,000000</div>
<div class="a" style="left:400px;top:16px;width:8px;height:1px;background:#ff6a00"></div>
<div class="a" style="left:408px;top:16px;width:6px;height:1px;background:#ff6000"></div>
<div class="a" style="left:414px;top:17px;width:8px;height:1px;background:#ff4c00"></div>
<div class="a" style="left:422px;top:16px;width:6px;height:1px;background:#ff7500"></div>
<div class="a" style="left:428px;top:16px;width:4px;height:1px;background:#ff6a00"></div>
<div class="a" style="left:432px;top:16px;width:5px;height:1px;background:#ff6000"></div>
<div class="a" style="left:437px;top:16px;width:1px;height:1px;background:#ff6000"></div>
<div class="a" style="left:438px;top:16px;width:3px;height:1px;background:#fff"></div>
<div class="t" style="left:416px;width:47px;text-align:right;top:4px;color:#ff6000;transform:scaleX(.9);transform-origin:100% 50%">-81</div>
</div>
<div class="a" style="left:3px;top:629px;width:1404px;height:21px;background:#1c1c1c;overflow:hidden">
<div class="a" style="left:0;top:0;width:19px;height:21px;background:#f0fff0"></div>
<div class="cb" style="left:3px;top:4px"></div>
<svg class="a" style="left:3px;top:4px" width="13" height="13"><path d="M2.5 6.5 L5.5 9.5 L10.5 3.5" stroke="#333" stroke-width="1.4" fill="none"/></svg>
<div class="a" style="left:19px;top:0;width:1px;height:21px;background:#484848"></div>
<div class="a" style="left:149px;top:0;width:1px;height:21px;background:#484848"></div>
<div class="a" style="left:385px;top:0;width:1px;height:21px;background:#484848"></div>
<div class="a" style="left:467px;top:0;width:1px;height:21px;background:#484848"></div>
<div class="a" style="left:517px;top:0;width:1px;height:21px;background:#484848"></div>
<div class="a" style="left:643px;top:0;width:1px;height:21px;background:#484848"></div>
<div class="a" style="left:769px;top:0;width:1px;height:21px;background:#484848"></div>
<div class="a" style="left:863px;top:0;width:1px;height:21px;background:#484848"></div>
<div class="a" style="left:963px;top:0;width:1px;height:21px;background:#484848"></div>
<div class="a" style="left:1073px;top:0;width:1px;height:21px;background:#484848"></div>
<div class="a" style="left:1183px;top:0;width:1px;height:21px;background:#484848"></div>
<div class="a" style="left:1294px;top:0;width:1px;height:21px;background:#484848"></div>
<div class="a" style="left:1404px;top:0;width:1px;height:21px;background:#484848"></div>
<div class="t mac" style="left:23px;top:4px">E0:CB:4E:DC:95:33</div>
<div class="t cell" style="left:153px;top:4px">default</div>
<div class="t cell" style="left:471px;top:4px">1</div>
<div class="t cell" style="left:521px;top:4px">ASUSTek COMPUTE...</div>
<div class="t cell" style="left:647px;top:4px">WPA-TKIP</div>
<div class="t cell" style="left:773px;top:4px">54</div>
<div class="t cell" style="left:867px;top:4px">Infrastructure</div>
<div class="t cell" style="left:967px;top:4px">14:07:35</div>
<div class="t cell" style="left:1077px;top:4px">14:08:13</div>
<div class="t cell" style="left:1187px;top:4px">0,000000</div>
<div class="t cell" style="left:1298px;top:4px">0,000000</div>
<div class="a" style="left:400px;top:18px;width:3px;height:1px;background:#ff3900"></div>
<div class="a" style="left:403px;top:17px;width:6px;height:1px;background:#ff4c00"></div>
<div class="a" style="left:409px;top:18px;width:4px;height:1px;background:#ff3300"></div>
<div class="a" style="left:413px;top:17px;width:5px;height:1px;background:#ff4c00"></div>
<div class="a" style="left:418px;top:18px;width:6px;height:1px;background:#ff3e00"></div>
<div class="a" style="left:424px;top:18px;width:4px;height:1px;background:#ff3e00"></div>
<div class="a" style="left:428px;top:18px;width:6px;height:1px;background:#ff3300"></div>
<div class="a" style="left:434px;top:18px;width:4px;height:1px;background:#ff3900"></div>
<div class="a" style="left:438px;top:18px;width:3px;height:1px;background:#fff"></div>
<div class="t" style="left:416px;width:47px;text-align:right;top:4px;color:#ff3e00;transform:scaleX(.9);transform-origin:100% 50%">-85</div>
</div>
<div class="a" style="left:3px;top:651px;width:1404px;height:8px;background:#000;overflow:hidden">
<div class="a" style="left:0;top:0;width:19px;height:21px;background:#ff6347"></div>
<div class="cb" style="left:3px;top:4px"></div>
<svg class="a" style="left:3px;top:4px" width="13" height="13"><path d="M2.5 6.5 L5.5 9.5 L10.5 3.5" stroke="#333" stroke-width="1.4" fill="none"/></svg>
<div class="a" style="left:19px;top:0;width:1px;height:21px;background:#484848"></div>
<div class="a" style="left:149px;top:0;width:1px;height:21px;background:#484848"></div>
<div class="a" style="left:385px;top:0;width:1px;height:21px;background:#484848"></div>
<div class="a" style="left:467px;top:0;width:1px;height:21px;background:#484848"></div>
<div class="a" style="left:517px;top:0;width:1px;height:21px;background:#484848"></div>
<div class="a" style="left:643px;top:0;width:1px;height:21px;background:#484848"></div>
<div class="a" style="left:769px;top:0;width:1px;height:21px;background:#484848"></div>
<div class="a" style="left:863px;top:0;width:1px;height:21px;background:#484848"></div>
<div class="a" style="left:963px;top:0;width:1px;height:21px;background:#484848"></div>
<div class="a" style="left:1073px;top:0;width:1px;height:21px;background:#484848"></div>
<div class="a" style="left:1183px;top:0;width:1px;height:21px;background:#484848"></div>
<div class="a" style="left:1294px;top:0;width:1px;height:21px;background:#484848"></div>
<div class="a" style="left:1404px;top:0;width:1px;height:21px;background:#484848"></div>
<div class="t mac" style="left:23px;top:4px">34:0A:33:C6:B1:57</div>
<div class="t cell" style="left:153px;top:4px">dlink-B156</div>
<div class="t cell" style="left:471px;top:4px">1 + 5</div>
<div class="t cell" style="left:647px;top:4px">RSNA-CCMP</div>
<div class="t cell" style="left:773px;top:4px">300 (N)</div>
<div class="t cell" style="left:867px;top:4px">Infrastructure</div>
<div class="t cell" style="left:967px;top:4px">14:07:40</div>
<div class="t cell" style="left:1077px;top:4px">14:08:13</div>
<div class="t cell" style="left:1187px;top:4px">0,000000</div>
<div class="t cell" style="left:1298px;top:4px">0,000000</div>
<div class="a" style="left:405px;top:17px;width:33px;height:1px;background:#ff4400"></div>
<div class="a" style="left:438px;top:17px;width:3px;height:1px;background:#fff"></div>
<div class="t" style="left:416px;width:47px;text-align:right;top:4px;color:#ff4400;transform:scaleX(.9);transform-origin:100% 50%">-84</div>
</div>
<div class="a" style="left:1408px;top:56px;width:17px;height:603px;background:#fff"></div>
<div class="a" style="left:1409px;top:57px;width:15px;height:601px;background:#f0f0f0"></div>
<div class="a" style="left:1409px;top:73px;width:15px;height:499px;background:#cdcdcd"></div>
<svg class="a" style="left:1409px;top:57px" width="15" height="16"><path d="M4.3 10.3 L7.5 6.3 L10.7 10.3" stroke="#606060" stroke-width="2" fill="none"/></svg>
<svg class="a" style="left:1409px;top:642px" width="15" height="16"><path d="M4.3 6.6 L7.5 10.6 L10.7 6.6" stroke="#606060" stroke-width="2" fill="none"/></svg>
<div class="a" style="left:697px;top:660px;width:32px;height:7px;border-radius:3px;background:#fff"></div>
<div class="a" style="left:700px;top:663px;width:26px;height:1px;background:#000"></div>
<div class="a" style="left:1px;top:687px;width:1425px;height:2px;background:#fff"></div>
<div class="a" style="left:1px;top:687px;width:4px;height:313px;background:#fff"></div>
<div class="a" style="left:1422px;top:687px;width:4px;height:256px;background:#f4f4f4"></div>
<div class="a" style="left:1px;top:996px;width:768px;height:2px;background:#fff"></div>
<div class="a" style="left:1px;top:998px;width:768px;height:1px;background:#d9d9d9"></div>
<div class="a" style="left:1px;top:999px;width:768px;height:1px;background:#efefef"></div>
<div class="a" style="left:1px;top:1000px;width:1425px;height:22px;background:#f0f0f0"></div>
<div class="a" style="left:1px;top:1000px;width:768px;height:1px;background:#dadada"></div>
<div class="t ui" style="left:4px;top:1005px;transform:scaleX(.97)">30 / 30 AP(s)</div>
<div class="t ui" style="left:105px;top:1005px;transform:scaleX(.93)">GPS: Off</div>
<div class="t ui" style="left:547px;top:1005px;transform:scaleX(1.0)">Logging: Off</div>
<div class="a" style="left:1421px;top:1009px;width:2px;height:2px;background:#999"></div>
<div class="a" style="left:1417px;top:1013px;width:2px;height:2px;background:#999"></div>
<div class="a" style="left:1421px;top:1013px;width:2px;height:2px;background:#999"></div>
<div class="a" style="left:1413px;top:1017px;width:2px;height:2px;background:#999"></div>
<div class="a" style="left:1417px;top:1017px;width:2px;height:2px;background:#999"></div>
<div class="a" style="left:1421px;top:1017px;width:2px;height:2px;background:#999"></div>
<svg class="a" style="left:0;top:0" width="1427" height="1023">
<rect x="59.5" y="698.5" width="1343" height="278" fill="none" stroke="#8a8a8a" stroke-width="1"/>
<line x1="64" y1="732.5" x2="1402" y2="732.5" stroke="#353535" stroke-dasharray="1 1"/>
<line x1="57" y1="732.5" x2="62" y2="732.5" stroke="#dcdcdc"/>
<text x="53.5" y="735.5" text-anchor="end" fill="#33cc33" font-size="12" textLength="16" lengthAdjust="spacingAndGlyphs">-20</text>
<line x1="64" y1="763.5" x2="1402" y2="763.5" stroke="#353535" stroke-dasharray="1 1"/>
<line x1="57" y1="763.5" x2="62" y2="763.5" stroke="#dcdcdc"/>
<text x="53.5" y="766.5" text-anchor="end" fill="#33cc33" font-size="12" textLength="16" lengthAdjust="spacingAndGlyphs">-30</text>
<line x1="64" y1="793.5" x2="1402" y2="793.5" stroke="#353535" stroke-dasharray="1 1"/>
<line x1="57" y1="793.5" x2="62" y2="793.5" stroke="#dcdcdc"/>
<text x="53.5" y="796.5" text-anchor="end" fill="#33cc33" font-size="12" textLength="16" lengthAdjust="spacingAndGlyphs">-40</text>
<line x1="64" y1="824.5" x2="1402" y2="824.5" stroke="#353535" stroke-dasharray="1 1"/>
<line x1="57" y1="824.5" x2="62" y2="824.5" stroke="#dcdcdc"/>
<text x="53.5" y="827.5" text-anchor="end" fill="#33cc33" font-size="12" textLength="16" lengthAdjust="spacingAndGlyphs">-50</text>
<line x1="64" y1="854.5" x2="1402" y2="854.5" stroke="#353535" stroke-dasharray="1 1"/>
<line x1="57" y1="854.5" x2="62" y2="854.5" stroke="#dcdcdc"/>
<text x="53.5" y="857.5" text-anchor="end" fill="#e0e000" font-size="12" textLength="16" lengthAdjust="spacingAndGlyphs">-60</text>
<line x1="64" y1="885.5" x2="1402" y2="885.5" stroke="#353535" stroke-dasharray="1 1"/>
<line x1="57" y1="885.5" x2="62" y2="885.5" stroke="#dcdcdc"/>
<text x="53.5" y="888.5" text-anchor="end" fill="#ff9900" font-size="12" textLength="16" lengthAdjust="spacingAndGlyphs">-70</text>
<line x1="64" y1="915.5" x2="1402" y2="915.5" stroke="#353535" stroke-dasharray="1 1"/>
<line x1="57" y1="915.5" x2="62" y2="915.5" stroke="#dcdcdc"/>
<text x="53.5" y="918.5" text-anchor="end" fill="#ff5a00" font-size="12" textLength="16" lengthAdjust="spacingAndGlyphs">-80</text>
<line x1="64" y1="946.5" x2="1402" y2="946.5" stroke="#353535" stroke-dasharray="1 1"/>
<line x1="57" y1="946.5" x2="62" y2="946.5" stroke="#dcdcdc"/>
<text x="53.5" y="949.5" text-anchor="end" fill="#ff3300" font-size="12" textLength="16" lengthAdjust="spacingAndGlyphs">-90</text>
<line x1="57" y1="976.5" x2="62" y2="976.5" stroke="#dcdcdc"/>
<text x="53.5" y="979.5" text-anchor="end" fill="#ff0000" font-size="12" textLength="22" lengthAdjust="spacingAndGlyphs">-100</text>
<text transform="translate(22.6,840) rotate(-90)" text-anchor="middle" fill="#00d400" font-size="11.6" textLength="68" lengthAdjust="spacingAndGlyphs">Amplitude [dB]</text>
<text x="235.3" y="991" text-anchor="middle" fill="#00e000" font-size="12">1</text>
<text x="305.2" y="991" text-anchor="middle" fill="#00e000" font-size="12">2</text>
<text x="375.0" y="991" text-anchor="middle" fill="#00e000" font-size="12">3</text>
<text x="444.9" y="991" text-anchor="middle" fill="#00e000" font-size="12">4</text>
<text x="514.7" y="991" text-anchor="middle" fill="#00e000" font-size="12">5</text>
<text x="584.6" y="991" text-anchor="middle" fill="#00e000" font-size="12">6</text>
<text x="654.5" y="991" text-anchor="middle" fill="#00e000" font-size="12">7</text>
<text x="724.3" y="991" text-anchor="middle" fill="#00e000" font-size="12">8</text>
<text x="794.2" y="991" text-anchor="middle" fill="#00e000" font-size="12">9</text>
<text x="864.0" y="991" text-anchor="middle" fill="#00e000" font-size="12">10</text>
<text x="933.9" y="991" text-anchor="middle" fill="#00e000" font-size="12">11</text>
<text x="1003.8" y="991" text-anchor="middle" fill="#00e000" font-size="12">12</text>
<text x="1073.6" y="991" text-anchor="middle" fill="#00e000" font-size="12">13</text>
<text x="1241.3" y="991" text-anchor="middle" fill="#00e000" font-size="12">14</text>
<path d="M578.6 976 Q599 954.2 599 932.0 L599 887 L1116 887 L1116 932.0 Q1116 954.2 1137.2 976" fill="none" stroke="#32cd32" stroke-width="2" shape-rendering="crispEdges"/>
<text x="856.4" y="882" text-anchor="middle" fill="#32cd32" font-size="12" transform="translate(856.4 0) scale(.935 1) translate(-856.4 0)">Etienne24</text>
<path d="M787.7 976 Q808 951.1 808 925.9 L808 875 L1045 875 L1045 925.9 Q1045 951.1 1066.3 976" fill="none" stroke="#4169e1" stroke-width="2" shape-rendering="crispEdges"/>
<text x="925.5" y="870" text-anchor="middle" fill="#4169e1" font-size="12" transform="translate(925.5 0) scale(.935 1) translate(-925.5 0)">O2-internet-406</text>
<path d="M228.5 976 Q249 930.5 249 884.7 L249 793 L486 793 L486 884.7 Q486 930.5 507.1 976" fill="none" stroke="#ffa500" stroke-width="2" shape-rendering="crispEdges"/>
<text x="366.3" y="788" text-anchor="middle" fill="#ffa500" font-size="12" transform="translate(366.3 0) scale(.935 1) translate(-366.3 0)">ZenWiFi</text>
<path d="M507.8 976 Q528 945.8 528 915.2 L528 854 L1045 854 L1045 915.2 Q1045 945.8 1066.4 976" fill="none" stroke="#fa8072" stroke-width="2" shape-rendering="crispEdges"/>
<text x="785.6" y="849" text-anchor="middle" fill="#fa8072" font-size="12" transform="translate(785.6 0) scale(.935 1) translate(-785.6 0)">dlink-250D</text>
<path d="M438.4 976 Q459 944.3 459 912.2 L459 848 L696 848 L696 912.2 Q696 944.3 717.0 976" fill="none" stroke="#40e0d0" stroke-width="2" shape-rendering="crispEdges"/>
<text x="576.2" y="843" text-anchor="middle" fill="#40e0d0" font-size="12" transform="translate(576.2 0) scale(.935 1) translate(-576.2 0)">Vodafone-1F9C</text>
<path d="M368.4 976 Q389 952.7 389 929.0 L389 881 L626 881 L626 929.0 Q626 952.7 647.1 976" fill="none" stroke="#f0fff0" stroke-width="2" shape-rendering="crispEdges"/>
<text x="506.2" y="876" text-anchor="middle" fill="#f0fff0" font-size="12" transform="translate(506.2 0) scale(.935 1) translate(-506.2 0)">Xguest24</text>
<path d="M368.4 976 Q389 953.4 389 930.5 L389 884 L626 884 L626 930.5 Q626 953.4 647.1 976" fill="none" stroke="#ff6347" stroke-width="2" shape-rendering="crispEdges"/>
<text x="506.2" y="879" text-anchor="middle" fill="#ff6347" font-size="12" transform="translate(506.2 0) scale(.935 1) translate(-506.2 0)">Xtreme24</text>
<path d="M228.5 976 Q249 953.4 249 930.5 L249 884 L486 884 L486 930.5 Q486 953.4 507.1 976" fill="none" stroke="#ffff00" stroke-width="2" shape-rendering="crispEdges"/>
<text x="366.3" y="879" text-anchor="middle" fill="#ffff00" font-size="12" transform="translate(366.3 0) scale(.935 1) translate(-366.3 0)">ZenWiFi</text>
<path d="M88.5 976 Q109 959.5 109 942.7 L109 909 L346 909 L346 942.7 Q346 959.5 367.1 976" fill="none" stroke="#6b8e23" stroke-width="2" shape-rendering="crispEdges"/>
<text x="226.3" y="904" text-anchor="middle" fill="#6b8e23" font-size="12" transform="translate(226.3 0) scale(.935 1) translate(-226.3 0)">UPC3389654</text>
<path d="M578.4 976 Q599 964.1 599 951.9 L599 927 L836 927 L836 951.9 Q836 964.1 857.0 976" fill="none" stroke="#ffa500" stroke-width="2" shape-rendering="crispEdges"/>
<text x="716.2" y="922" text-anchor="middle" fill="#ffa500" font-size="12" transform="translate(716.2 0) scale(.935 1) translate(-716.2 0)">oTc Net</text>
<path d="M88.5 976 Q109 963.4 109 950.4 L109 924 L346 924 L346 950.4 Q346 963.4 367.1 976" fill="none" stroke="#808080" stroke-width="2" shape-rendering="crispEdges"/>
<text x="226.3" y="919" text-anchor="middle" fill="#808080" font-size="12" transform="translate(226.3 0) scale(.935 1) translate(-226.3 0)">UPC2552434</text>
<path d="M88.5 976 Q109 962.6 109 948.8 L109 921 L346 921 L346 948.8 Q346 962.6 367.1 976" fill="none" stroke="#ffc0cb" stroke-width="2" shape-rendering="crispEdges"/>
<text x="226.3" y="916" text-anchor="middle" fill="#ffc0cb" font-size="12" transform="translate(226.3 0) scale(.935 1) translate(-226.3 0)">SH2048V.24</text>
<path d="M578.6 976 Q599 963.4 599 950.4 L599 924 L1116 924 L1116 950.4 Q1116 963.4 1137.2 976" fill="none" stroke="#800000" stroke-width="2" shape-rendering="crispEdges"/>
<text x="856.4" y="919" text-anchor="middle" fill="#800000" font-size="12" transform="translate(856.4 0) scale(.935 1) translate(-856.4 0)">ekonomik</text>
<path d="M787.7 976 Q808 957.2 808 938.2 L808 899 L1045 899 L1045 938.2 Q1045 957.2 1066.3 976" fill="none" stroke="#fa8072" stroke-width="2" shape-rendering="crispEdges"/>
<text x="925.5" y="894" text-anchor="middle" fill="#fa8072" font-size="12" transform="translate(925.5 0) scale(.935 1) translate(-925.5 0)">UPC3972776</text>
<path d="M88.5 976 Q109 961.8 109 947.3 L109 918 L346 918 L346 947.3 Q346 961.8 367.1 976" fill="none" stroke="#40e0d0" stroke-width="2" shape-rendering="crispEdges"/>
<text x="226.3" y="913" text-anchor="middle" fill="#40e0d0" font-size="12" transform="translate(226.3 0) scale(.935 1) translate(-226.3 0)">Odyssey_2G_Guest</text>
<path d="M88.5 976 Q109 964.9 109 953.4 L109 930 L346 930 L346 953.4 Q346 964.9 367.1 976" fill="none" stroke="#f0fff0" stroke-width="2" shape-rendering="crispEdges"/>
<text x="226.3" y="925" text-anchor="middle" fill="#f0fff0" font-size="12" transform="translate(226.3 0) scale(.935 1) translate(-226.3 0)">default</text>
<path d="M88.5 976 Q109 964.1 109 951.9 L109 927 L626 927 L626 951.9 Q626 964.1 647.1 976" fill="none" stroke="#ff6347" stroke-width="2" shape-rendering="crispEdges"/>
<text x="366.3" y="922" text-anchor="middle" fill="#ff6347" font-size="12" transform="translate(366.3 0) scale(.935 1) translate(-366.3 0)">dlink-B156</text>
<path d="M438.4 976 Q459 964.1 459 951.9 L459 927 L696 927 L696 951.9 Q696 964.1 717.0 976" fill="none" stroke="#ffff00" stroke-width="2" shape-rendering="crispEdges"/>
<text x="576.2" y="922" text-anchor="middle" fill="#ffff00" font-size="12" transform="translate(576.2 0) scale(.935 1) translate(-576.2 0)">dlink-BC40</text>
<path d="M88.5 976 Q109 964.1 109 951.9 L109 927 L346 927 L346 951.9 Q346 964.1 367.1 976" fill="none" stroke="#6b8e23" stroke-width="2" shape-rendering="crispEdges"/>
<text x="226.3" y="922" text-anchor="middle" fill="#6b8e23" font-size="12" transform="translate(226.3 0) scale(.935 1) translate(-226.3 0)">DaliaNet24</text>
<path d="M88.5 976 Q109 964.1 109 951.9 L109 927 L626 927 L626 951.9 Q626 964.1 647.1 976" fill="none" stroke="#bdb76b" stroke-width="2" shape-rendering="crispEdges"/>
<text x="366.3" y="922" text-anchor="middle" fill="#bdb76b" font-size="12" transform="translate(366.3 0) scale(.935 1) translate(-366.3 0)">Zdenny</text>
</svg>
</body></html>
